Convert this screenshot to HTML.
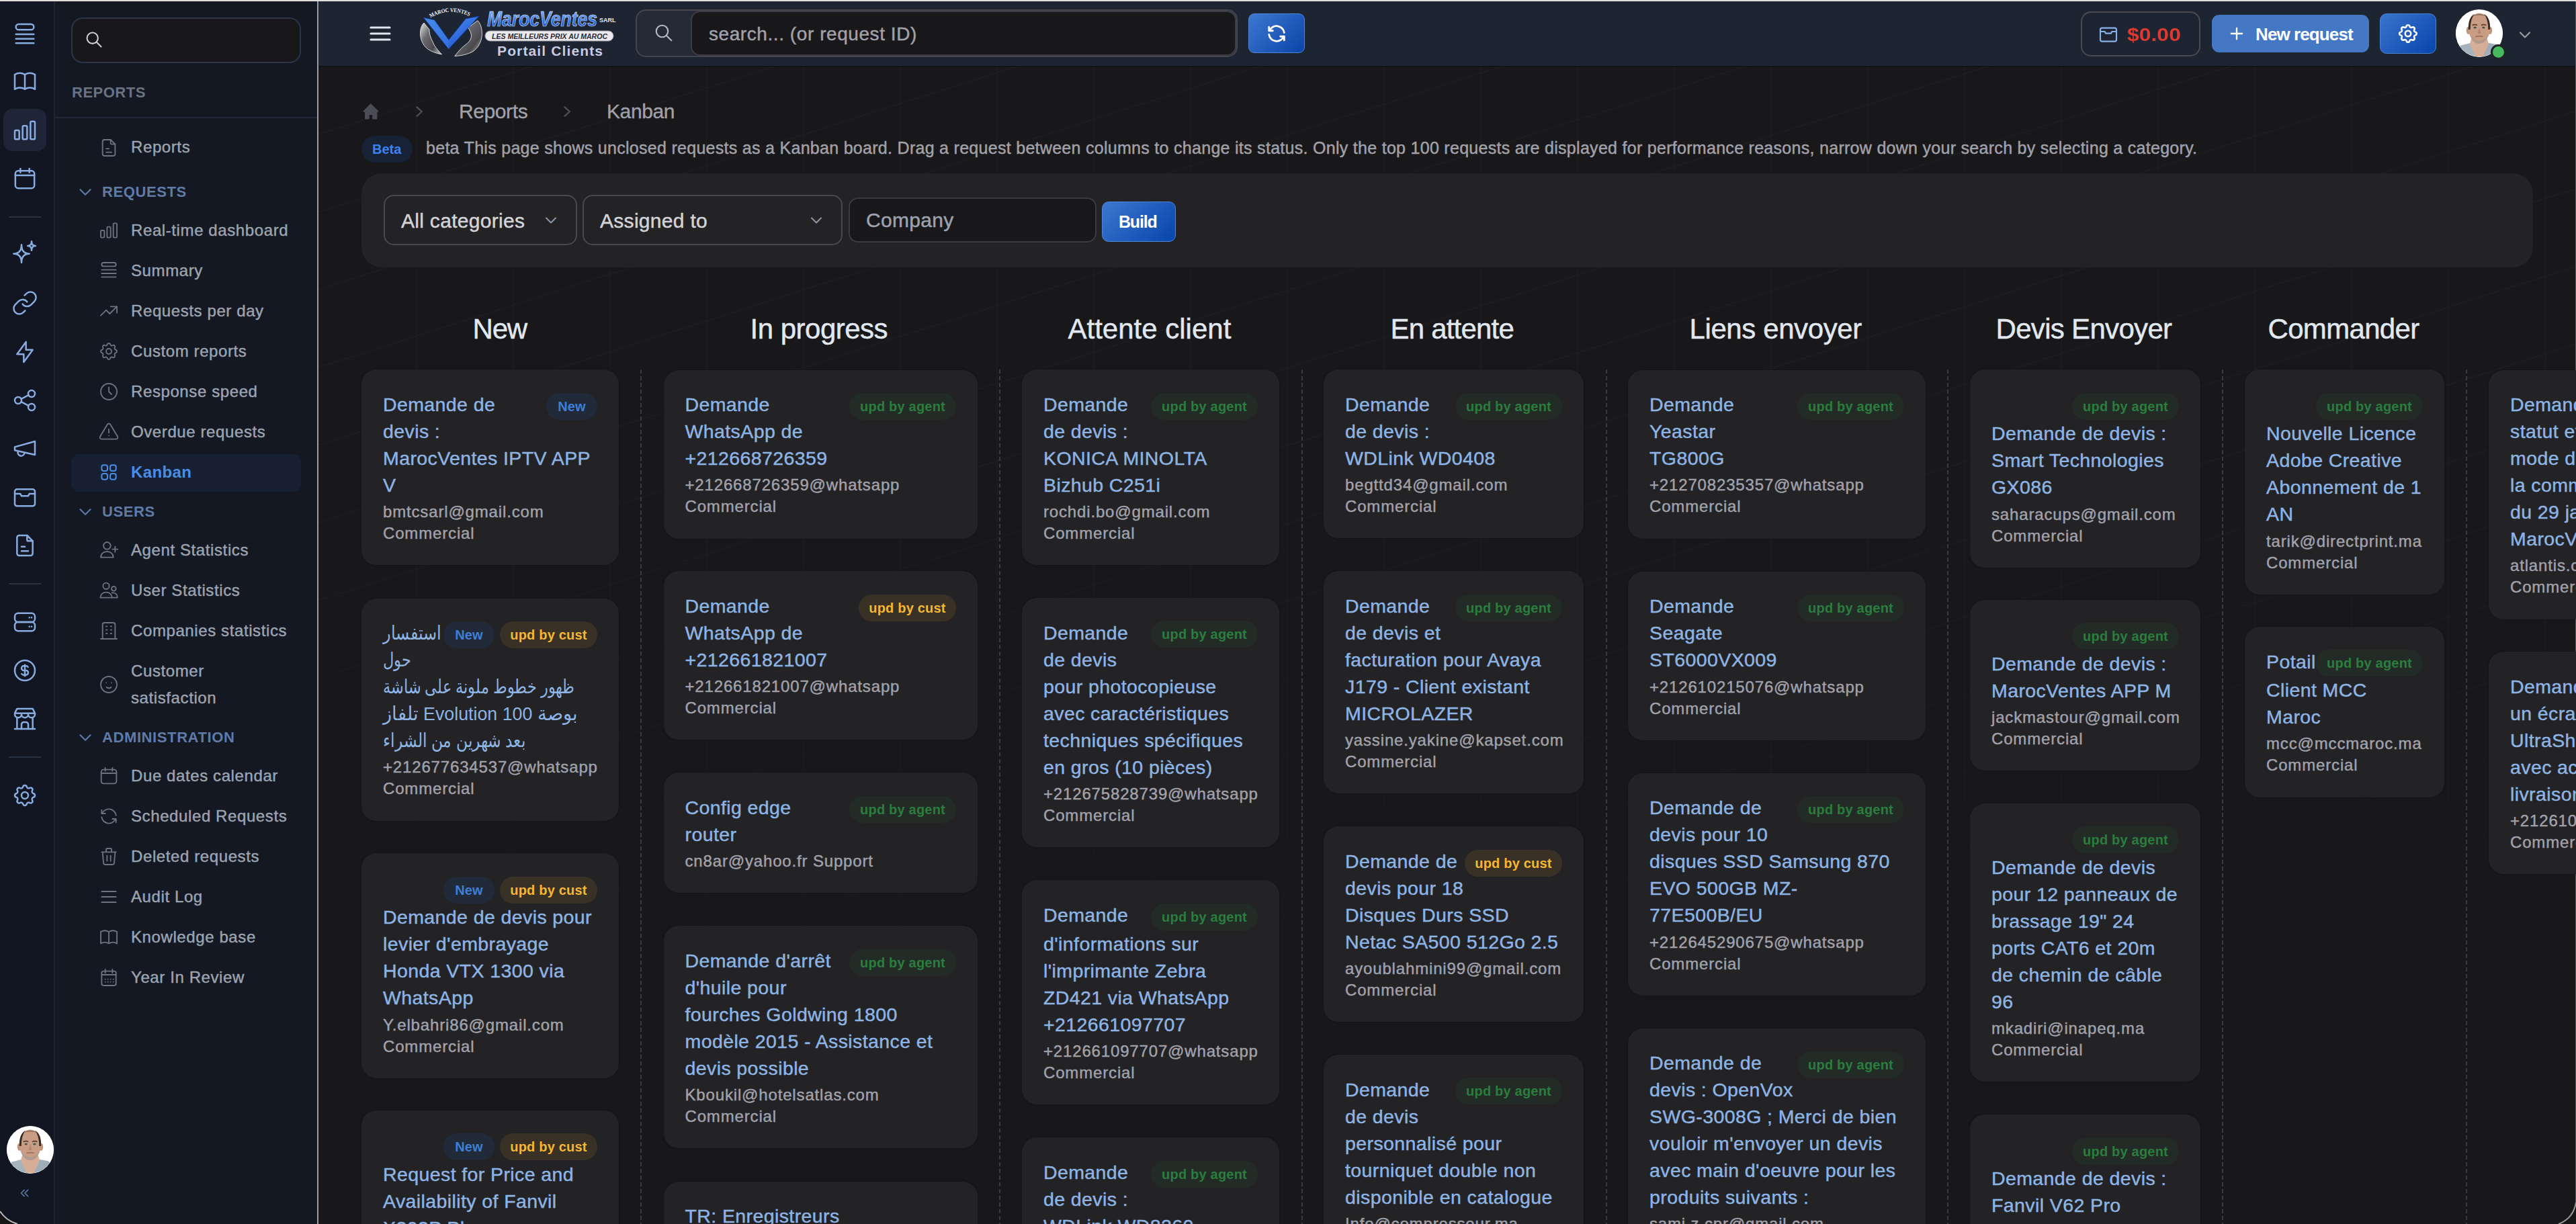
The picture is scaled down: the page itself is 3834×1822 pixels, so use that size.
<!DOCTYPE html><html><head><meta charset="utf-8"><style>
html,body{margin:0;padding:0;}
body{width:3834px;height:1822px;overflow:hidden;position:relative;background:#18181b;font-family:"Liberation Sans", sans-serif;}
.t{position:absolute;white-space:nowrap;}
.w4{-webkit-text-stroke:0.45px currentColor;}
.r{position:absolute;}
.ic{position:absolute;overflow:visible;}
.av{position:absolute;border-radius:50%;overflow:hidden;background:#fff;}
</style></head><body>
<div class="r" style="left:0px;top:0px;width:3834px;height:2px;background:#dedfdb;"></div>
<div class="r" style="left:0px;top:2px;width:81px;height:1820px;background:#111622;"></div>
<div class="r" style="left:80px;top:2px;width:2px;height:1820px;background:#1d2432;"></div>
<div class="r" style="left:82px;top:2px;width:390px;height:1820px;background:#131823;"></div>
<div class="r" style="left:472px;top:2px;width:2px;height:1820px;background:#9aa0a9;"></div>
<div class="r" style="left:474px;top:2px;width:3360px;height:96px;background:#1d2432;box-shadow:0 1px 1px rgba(0,0,0,.35);"></div>
<svg class="ic" style="left:474px;top:97px;width:3360px;height:1725px;overflow:hidden;-webkit-mask-image:linear-gradient(to bottom,#000 0px,#000 500px,rgba(0,0,0,.65) 1000px,transparent 1420px);mask-image:linear-gradient(to bottom,#000 0px,#000 500px,rgba(0,0,0,.65) 1000px,transparent 1420px)" viewBox="0 0 3360 1725"><g stroke="rgba(255,255,255,0.028)" stroke-width="1.6"><line x1="145.5" y1="0" x2="145.5" y2="1725"/><line x1="289.5" y1="0" x2="289.5" y2="1725"/><line x1="433.6" y1="0" x2="433.6" y2="1725"/><line x1="577.6" y1="0" x2="577.6" y2="1725"/><line x1="721.7" y1="0" x2="721.7" y2="1725"/><line x1="865.7" y1="0" x2="865.7" y2="1725"/><line x1="1009.8" y1="0" x2="1009.8" y2="1725"/><line x1="1153.8" y1="0" x2="1153.8" y2="1725"/><line x1="1297.9" y1="0" x2="1297.9" y2="1725"/><line x1="1441.9" y1="0" x2="1441.9" y2="1725"/><line x1="1586.0" y1="0" x2="1586.0" y2="1725"/><line x1="1730.0" y1="0" x2="1730.0" y2="1725"/><line x1="1874.1" y1="0" x2="1874.1" y2="1725"/><line x1="2018.2" y1="0" x2="2018.2" y2="1725"/><line x1="2162.2" y1="0" x2="2162.2" y2="1725"/><line x1="2306.3" y1="0" x2="2306.3" y2="1725"/><line x1="2450.3" y1="0" x2="2450.3" y2="1725"/><line x1="2594.4" y1="0" x2="2594.4" y2="1725"/><line x1="2738.4" y1="0" x2="2738.4" y2="1725"/><line x1="2882.5" y1="0" x2="2882.5" y2="1725"/><line x1="3026.5" y1="0" x2="3026.5" y2="1725"/><line x1="3170.6" y1="0" x2="3170.6" y2="1725"/><line x1="3314.6" y1="0" x2="3314.6" y2="1725"/><line x1="0" y1="103.1" x2="3360" y2="-972.1"/><line x1="0" y1="218.7" x2="3360" y2="-856.5"/><line x1="0" y1="334.3" x2="3360" y2="-740.9"/><line x1="0" y1="449.9" x2="3360" y2="-625.3"/><line x1="0" y1="565.5" x2="3360" y2="-509.7"/><line x1="0" y1="681.1" x2="3360" y2="-394.1"/><line x1="0" y1="796.7" x2="3360" y2="-278.5"/><line x1="0" y1="912.3" x2="3360" y2="-162.9"/><line x1="0" y1="1027.9" x2="3360" y2="-47.3"/><line x1="0" y1="1143.5" x2="3360" y2="68.3"/><line x1="0" y1="1259.1" x2="3360" y2="183.9"/><line x1="0" y1="1374.7" x2="3360" y2="299.5"/><line x1="0" y1="1490.3" x2="3360" y2="415.1"/><line x1="0" y1="1605.9" x2="3360" y2="530.7"/><line x1="0" y1="1721.5" x2="3360" y2="646.3"/><line x1="0" y1="1837.1" x2="3360" y2="761.9"/><line x1="0" y1="1952.7" x2="3360" y2="877.5"/><line x1="0" y1="2068.3" x2="3360" y2="993.1"/><line x1="0" y1="2183.9" x2="3360" y2="1108.7"/><line x1="0" y1="2299.5" x2="3360" y2="1224.3"/><line x1="0" y1="2415.1" x2="3360" y2="1339.9"/><line x1="0" y1="2530.7" x2="3360" y2="1455.5"/><line x1="0" y1="2646.3" x2="3360" y2="1571.1"/><line x1="0" y1="2761.9" x2="3360" y2="1686.7"/></g></svg>
<div class="r" style="left:3833px;top:2px;width:1px;height:1820px;background:#5a5d63;"></div>
<div class="r" style="left:5px;top:162px;width:64px;height:63px;background:#1d2536;border-radius:14px;"></div>
<svg class="ic" style="left:17px;top:31px;width:40px;height:40px" viewBox="0 0 24 24" fill="none" stroke="#88acdf" stroke-width="1.5" stroke-linecap="round" stroke-linejoin="round"><rect x="4" y="3" width="16" height="5" rx="2.5"/><path d="M4 12h16M4 16h16M4 20h16"/></svg>
<svg class="ic" style="left:17px;top:101px;width:40px;height:40px" viewBox="0 0 24 24" fill="none" stroke="#88acdf" stroke-width="1.5" stroke-linecap="round" stroke-linejoin="round"><path d="M3 19a9 9 0 0 1 9 0a9 9 0 0 1 9 0"/><path d="M3 6a9 9 0 0 1 9 0a9 9 0 0 1 9 0"/><path d="M3 6v13M12 6v13M21 6v13"/></svg>
<svg class="ic" style="left:17px;top:174px;width:40px;height:40px" viewBox="0 0 24 24" fill="none" stroke="#88acdf" stroke-width="1.5" stroke-linecap="round" stroke-linejoin="round"><rect x="3" y="12" width="4" height="8" rx="1"/><rect x="10" y="8" width="4" height="12" rx="1"/><rect x="17" y="4" width="4" height="16" rx="1"/></svg>
<svg class="ic" style="left:17px;top:246px;width:40px;height:40px" viewBox="0 0 24 24" fill="none" stroke="#88acdf" stroke-width="1.5" stroke-linecap="round" stroke-linejoin="round"><rect x="3.5" y="5" width="17" height="15.5" rx="2.5"/><path d="M16 3v3.5M8 3v3.5M3.5 9h17"/></svg>
<svg class="ic" style="left:17px;top:356px;width:40px;height:40px" viewBox="0 0 24 24" fill="none" stroke="#88acdf" stroke-width="1.5" stroke-linecap="round" stroke-linejoin="round"><path d="M9 21c0-5-2-8-7-8c5 0 7-3 7-8c0 5 2 8 7 8c-5 0-7 3-7 8z"/><path d="M18 10c0-2.5-1-4-3.5-4c2.5 0 3.5-1.5 3.5-4c0 2.5 1 4 3.5 4c-2.5 0-3.5 1.5-3.5 4z"/></svg>
<svg class="ic" style="left:17px;top:431px;width:40px;height:40px" viewBox="0 0 24 24" fill="none" stroke="#88acdf" stroke-width="1.5" stroke-linecap="round" stroke-linejoin="round"><path d="M10 13a5 5 0 0 0 7.54.54l3-3a5 5 0 0 0-7.07-7.07l-1.72 1.71"/><path d="M14 11a5 5 0 0 0-7.54-.54l-3 3a5 5 0 0 0 7.07 7.07l1.71-1.71"/></svg>
<svg class="ic" style="left:17px;top:504px;width:40px;height:40px" viewBox="0 0 24 24" fill="none" stroke="#88acdf" stroke-width="1.5" stroke-linecap="round" stroke-linejoin="round"><path d="M13 3l0 7l6 0l-8 11l0 -7l-6 0l8 -11"/></svg>
<svg class="ic" style="left:17px;top:576px;width:40px;height:40px" viewBox="0 0 24 24" fill="none" stroke="#88acdf" stroke-width="1.5" stroke-linecap="round" stroke-linejoin="round"><circle cx="6" cy="12" r="3"/><circle cx="18" cy="6" r="3"/><circle cx="18" cy="18" r="3"/><path d="M8.7 10.7l6.6 -3.4M8.7 13.3l6.6 3.4"/></svg>
<svg class="ic" style="left:17px;top:647px;width:40px;height:40px" viewBox="0 0 24 24" fill="none" stroke="#88acdf" stroke-width="1.5" stroke-linecap="round" stroke-linejoin="round"><path d="m3 11 18-5v12L3 14v-3z"/><path d="M11.6 16.8a3 3 0 1 1-5.8-1.6"/></svg>
<svg class="ic" style="left:17px;top:720px;width:40px;height:40px" viewBox="0 0 24 24" fill="none" stroke="#88acdf" stroke-width="1.5" stroke-linecap="round" stroke-linejoin="round"><rect x="3" y="5" width="18" height="15" rx="2"/><path d="M3 9h5l1 2h6l1-2h5"/></svg>
<svg class="ic" style="left:17px;top:792px;width:40px;height:40px" viewBox="0 0 24 24" fill="none" stroke="#88acdf" stroke-width="1.5" stroke-linecap="round" stroke-linejoin="round"><path d="M14 3v4a1 1 0 0 0 1 1h4"/><path d="M17 21h-10a2 2 0 0 1 -2 -2v-14a2 2 0 0 1 2 -2h7l5 5v11a2 2 0 0 1 -2 2z"/><path d="M9 17h6M9 13h3"/></svg>
<svg class="ic" style="left:17px;top:906px;width:40px;height:40px" viewBox="0 0 24 24" fill="none" stroke="#88acdf" stroke-width="1.5" stroke-linecap="round" stroke-linejoin="round"><path d="M3 4m0 3a3 3 0 0 1 3 -3h12a3 3 0 0 1 3 3v2a3 3 0 0 1 -3 3h-12a3 3 0 0 1 -3 -3z"/><path d="M3 12m0 3a3 3 0 0 1 3 -3h12a3 3 0 0 1 3 3v2a3 3 0 0 1 -3 3h-12a3 3 0 0 1 -3 -3z"/><path d="M7 8h.01M7 16h.01" transform="translate(9,0)"/><path d="M7 8h.01M7 16h.01" transform="translate(11,0)"/></svg>
<svg class="ic" style="left:17px;top:978px;width:40px;height:40px" viewBox="0 0 24 24" fill="none" stroke="#88acdf" stroke-width="1.5" stroke-linecap="round" stroke-linejoin="round"><circle cx="12" cy="12" r="9"/><path d="M14.8 9a2 2 0 0 0 -1.8 -1h-2a2 2 0 1 0 0 4h2a2 2 0 1 1 0 4h-2a2 2 0 0 1 -1.8 -1"/><path d="M12 7v10"/></svg>
<svg class="ic" style="left:17px;top:1050px;width:40px;height:40px" viewBox="0 0 24 24" fill="none" stroke="#88acdf" stroke-width="1.5" stroke-linecap="round" stroke-linejoin="round"><path d="M3 21l18 0"/><path d="M3 7v1a3 3 0 0 0 6 0v-1m0 1a3 3 0 0 0 6 0v-1m0 1a3 3 0 0 0 6 0v-1h-18l2 -4h14l2 4"/><path d="M5 21l0 -10.15"/><path d="M19 21l0 -10.15"/><path d="M9 21v-4a2 2 0 0 1 2 -2h2a2 2 0 0 1 2 2v4"/></svg>
<svg class="ic" style="left:17px;top:1164px;width:40px;height:40px" viewBox="0 0 24 24" fill="none" stroke="#88acdf" stroke-width="1.5" stroke-linecap="round" stroke-linejoin="round"><path d="M10.325 4.317c.426 -1.756 2.924 -1.756 3.35 0a1.724 1.724 0 0 0 2.573 1.066c1.543 -.94 3.31 .826 2.37 2.37a1.724 1.724 0 0 0 1.065 2.572c1.756 .426 1.756 2.924 0 3.35a1.724 1.724 0 0 0 -1.066 2.573c.94 1.543 -.826 3.31 -2.37 2.37a1.724 1.724 0 0 0 -2.572 1.065c-.426 1.756 -2.924 1.756 -3.35 0a1.724 1.724 0 0 0 -2.573 -1.066c-1.543 .94 -3.31 -.826 -2.37 -2.37a1.724 1.724 0 0 0 -1.065 -2.572c-1.756 -.426 -1.756 -2.924 0 -3.35a1.724 1.724 0 0 0 1.066 -2.573c-.94 -1.543 .826 -3.31 2.37 -2.37c1 .608 2.296 .07 2.572 -1.065z"/><circle cx="12" cy="12" r="3"/></svg>
<div class="r" style="left:13px;top:322px;width:48px;height:2px;background:#283142;"></div>
<div class="r" style="left:13px;top:868px;width:48px;height:2px;background:#283142;"></div>
<div class="r" style="left:13px;top:1126px;width:48px;height:2px;background:#283142;"></div>
<div class="av" style="left:10px;top:1676px;width:70px;height:71px;"><svg viewBox="0 0 100 100" width="100%" height="100%" style="display:block"><defs><clipPath id="avca"><circle cx="50" cy="50" r="50"/></clipPath></defs>
<g clip-path="url(#avca)"><rect width="100" height="100" fill="#ffffff"/>
<path d="M0 88 L10 76 L34 70 L46 100 L0 100Z" fill="#a5b3bd"/><path d="M100 84 L88 74 L66 70 L56 100 L100 100Z" fill="#9fadb8"/>
<path d="M33 62 L67 62 L70 72 L58 100 L42 100 L30 72Z" fill="#d6ae98"/>
<ellipse cx="27" cy="44" rx="4.5" ry="8" fill="#c2917a"/><ellipse cx="73" cy="44" rx="4.5" ry="8" fill="#c2917a"/>
<ellipse cx="50" cy="39" rx="23" ry="32" fill="#c99c84"/>
<path d="M27 42 Q26 16 40 9 Q31 20 31 42Z" fill="#3a2c24"/><path d="M73 42 Q74 16 60 9 Q69 20 69 42Z" fill="#3a2c24"/>
<path d="M34 14 Q50 4 66 14 Q50 9 34 14Z" fill="#8b6b5a"/>
<path d="M30 50 Q34 72 50 72 Q66 72 70 50 Q66 64 50 66 Q34 64 30 50Z" fill="#b09a8c"/>
<path d="M35 33 Q41 30 46 33" stroke="#5a3f33" stroke-width="2.4" fill="none"/><path d="M54 33 Q59 30 65 33" stroke="#5a3f33" stroke-width="2.4" fill="none"/>
<ellipse cx="41" cy="38" rx="3.2" ry="1.9" fill="#42524f"/><ellipse cx="59" cy="38" rx="3.2" ry="1.9" fill="#42524f"/>
<path d="M50 38 L46.5 50 Q50 52 53.5 50Z" fill="#b3876e"/>
<path d="M42 57 Q50 55 58 57" stroke="#96685a" stroke-width="2.2" fill="none"/>
</g></svg></div>
<svg class="ic" style="left:26px;top:1765px;width:22px;height:22px" viewBox="0 0 24 24" fill="none" stroke="#5677aa" stroke-width="1.8" stroke-linecap="round" stroke-linejoin="round"><path d="M11 7l-5 5l5 5"/><path d="M17 7l-5 5l5 5"/></svg>
<div class="r" style="left:106px;top:26px;width:342px;height:68px;background:#18181b;border:2px solid #2a3546;border-radius:17px;box-sizing:border-box;"></div>
<svg class="ic" style="left:126px;top:45px;width:28px;height:28px" viewBox="0 0 24 24" fill="none" stroke="#c9cdd4" stroke-width="1.8" stroke-linecap="round" stroke-linejoin="round"><circle cx="10" cy="10" r="7"/><path d="M21 21l-6 -6"/></svg>
<div class="t" style="left:107px;top:124.38px;font-size:22px;line-height:28px;color:#6b7280;font-weight:700;letter-spacing:0.5px;">REPORTS</div>
<div class="r" style="left:82px;top:174px;width:390px;height:2px;background:#202837;"></div>
<svg class="ic" style="left:146px;top:203.7px;width:32px;height:32px" viewBox="0 0 24 24" fill="none" stroke="#6b7280" stroke-width="1.4" stroke-linecap="round" stroke-linejoin="round"><path d="M14 3v4a1 1 0 0 0 1 1h4"/><path d="M17 21h-10a2 2 0 0 1 -2 -2v-14a2 2 0 0 1 2 -2h7l5 5v11a2 2 0 0 1 -2 2z"/><path d="M9 17h6M9 13h3"/></svg>
<div class="t w4" style="left:195px;top:204.38px;font-size:24px;line-height:30px;color:#9ca3af;font-weight:400;letter-spacing:0.6px;">Reports</div>
<svg class="ic" style="left:112px;top:271px;width:30px;height:30px" viewBox="0 0 24 24" fill="none" stroke="#5c7aa6" stroke-width="1.7" stroke-linecap="round" stroke-linejoin="round"><path d="M6 9l6 6l6 -6"/></svg>
<div class="t" style="left:152px;top:272.38px;font-size:22px;line-height:28px;color:#5f7ba6;font-weight:700;letter-spacing:0.6px;">REQUESTS</div>
<svg class="ic" style="left:146px;top:327px;width:32px;height:32px" viewBox="0 0 24 24" fill="none" stroke="#6b7280" stroke-width="1.4" stroke-linecap="round" stroke-linejoin="round"><rect x="3" y="12" width="4" height="8" rx="1"/><rect x="10" y="8" width="4" height="12" rx="1"/><rect x="17" y="4" width="4" height="16" rx="1"/></svg>
<div class="t w4" style="left:195px;top:327.68px;font-size:24px;line-height:30px;color:#9ca3af;font-weight:400;letter-spacing:0.6px;">Real-time dashboard</div>
<svg class="ic" style="left:146px;top:387px;width:32px;height:32px" viewBox="0 0 24 24" fill="none" stroke="#6b7280" stroke-width="1.4" stroke-linecap="round" stroke-linejoin="round"><rect x="4" y="3" width="16" height="4" rx="2"/><path d="M4 11h16M4 15h16M4 19h16"/></svg>
<div class="t w4" style="left:195px;top:387.68px;font-size:24px;line-height:30px;color:#9ca3af;font-weight:400;letter-spacing:0.6px;">Summary</div>
<svg class="ic" style="left:146px;top:447px;width:32px;height:32px" viewBox="0 0 24 24" fill="none" stroke="#6b7280" stroke-width="1.4" stroke-linecap="round" stroke-linejoin="round"><path d="M3 17l6 -6l4 4l8 -8"/><path d="M14 7l7 0l0 7"/></svg>
<div class="t w4" style="left:195px;top:447.68px;font-size:24px;line-height:30px;color:#9ca3af;font-weight:400;letter-spacing:0.6px;">Requests per day</div>
<svg class="ic" style="left:146px;top:507px;width:32px;height:32px" viewBox="0 0 24 24" fill="none" stroke="#6b7280" stroke-width="1.4" stroke-linecap="round" stroke-linejoin="round"><path d="M10.325 4.317c.426 -1.756 2.924 -1.756 3.35 0a1.724 1.724 0 0 0 2.573 1.066c1.543 -.94 3.31 .826 2.37 2.37a1.724 1.724 0 0 0 1.065 2.572c1.756 .426 1.756 2.924 0 3.35a1.724 1.724 0 0 0 -1.066 2.573c.94 1.543 -.826 3.31 -2.37 2.37a1.724 1.724 0 0 0 -2.572 1.065c-.426 1.756 -2.924 1.756 -3.35 0a1.724 1.724 0 0 0 -2.573 -1.066c-1.543 .94 -3.31 -.826 -2.37 -2.37a1.724 1.724 0 0 0 -1.065 -2.572c-1.756 -.426 -1.756 -2.924 0 -3.35a1.724 1.724 0 0 0 1.066 -2.573c-.94 -1.543 .826 -3.31 2.37 -2.37c1 .608 2.296 .07 2.572 -1.065z"/><circle cx="12" cy="12" r="3"/></svg>
<div class="t w4" style="left:195px;top:507.68px;font-size:24px;line-height:30px;color:#9ca3af;font-weight:400;letter-spacing:0.6px;">Custom reports</div>
<svg class="ic" style="left:146px;top:567px;width:32px;height:32px" viewBox="0 0 24 24" fill="none" stroke="#6b7280" stroke-width="1.4" stroke-linecap="round" stroke-linejoin="round"><circle cx="12" cy="12" r="9"/><path d="M12 7v5l3 3"/></svg>
<div class="t w4" style="left:195px;top:567.68px;font-size:24px;line-height:30px;color:#9ca3af;font-weight:400;letter-spacing:0.6px;">Response speed</div>
<svg class="ic" style="left:146px;top:627px;width:32px;height:32px" viewBox="0 0 24 24" fill="none" stroke="#6b7280" stroke-width="1.4" stroke-linecap="round" stroke-linejoin="round"><path d="M12 9v4"/><path d="M10.363 3.591l-8.106 13.534a1.914 1.914 0 0 0 1.636 2.871h16.214a1.914 1.914 0 0 0 1.636 -2.87l-8.106 -13.536a1.914 1.914 0 0 0 -3.274 0z"/><path d="M12 16h.01"/></svg>
<div class="t w4" style="left:195px;top:627.68px;font-size:24px;line-height:30px;color:#9ca3af;font-weight:400;letter-spacing:0.6px;">Overdue requests</div>
<div class="r" style="left:106px;top:676px;width:342px;height:56px;background:#172033;border-radius:12px;"></div>
<svg class="ic" style="left:146px;top:687px;width:32px;height:32px" viewBox="0 0 24 24" fill="none" stroke="#4a8de6" stroke-width="1.5" stroke-linecap="round" stroke-linejoin="round"><rect x="4" y="4" width="6.5" height="6.5" rx="2.2"/><rect x="13.5" y="4" width="6.5" height="6.5" rx="2.2"/><rect x="4" y="13.5" width="6.5" height="6.5" rx="2.2"/><rect x="13.5" y="13.5" width="6.5" height="6.5" rx="2.2"/></svg>
<div class="t" style="left:195px;top:687.68px;font-size:24px;line-height:30px;color:#4a8de6;font-weight:700;letter-spacing:0.4px;">Kanban</div>
<svg class="ic" style="left:112px;top:746.5px;width:30px;height:30px" viewBox="0 0 24 24" fill="none" stroke="#5c7aa6" stroke-width="1.7" stroke-linecap="round" stroke-linejoin="round"><path d="M6 9l6 6l6 -6"/></svg>
<div class="t" style="left:152px;top:747.88px;font-size:22px;line-height:28px;color:#5f7ba6;font-weight:700;letter-spacing:0.6px;">USERS</div>
<svg class="ic" style="left:146px;top:803px;width:32px;height:32px" viewBox="0 0 24 24" fill="none" stroke="#6b7280" stroke-width="1.4" stroke-linecap="round" stroke-linejoin="round"><circle cx="10" cy="7" r="4"/><path d="M3 20c0-3.9 3.1-6.5 7-6.5s7 2.6 7 6.5z"/><path d="M16 11h6m-3 -3v6"/></svg>
<div class="t w4" style="left:195px;top:803.68px;font-size:24px;line-height:30px;color:#9ca3af;font-weight:400;letter-spacing:0.6px;">Agent Statistics</div>
<svg class="ic" style="left:146px;top:863px;width:32px;height:32px" viewBox="0 0 24 24" fill="none" stroke="#6b7280" stroke-width="1.4" stroke-linecap="round" stroke-linejoin="round"><circle cx="9" cy="7" r="3.5"/><path d="M2.5 20c0-3.5 2.9-6 6.5-6s6.5 2.5 6.5 6z"/><circle cx="17.5" cy="10" r="2.5"/><path d="M15.5 14.6c3.5-0.6 6 1.5 6 4.4v1h-6"/></svg>
<div class="t w4" style="left:195px;top:863.68px;font-size:24px;line-height:30px;color:#9ca3af;font-weight:400;letter-spacing:0.6px;">User Statistics</div>
<svg class="ic" style="left:146px;top:923px;width:32px;height:32px" viewBox="0 0 24 24" fill="none" stroke="#6b7280" stroke-width="1.4" stroke-linecap="round" stroke-linejoin="round"><path d="M3 21l18 0"/><path d="M5 21v-16a2 2 0 0 1 2 -2h10a2 2 0 0 1 2 2v16"/><path d="M9 7h1M9 11h1M9 15h1M14 7h1M14 11h1M14 15h1"/></svg>
<div class="t w4" style="left:195px;top:923.68px;font-size:24px;line-height:30px;color:#9ca3af;font-weight:400;letter-spacing:0.6px;">Companies statistics</div>
<svg class="ic" style="left:146px;top:1003px;width:32px;height:32px" viewBox="0 0 24 24" fill="none" stroke="#6b7280" stroke-width="1.4" stroke-linecap="round" stroke-linejoin="round"><circle cx="12" cy="12" r="9"/><path d="M9 10l.01 0M15 10l.01 0"/><path d="M9.5 15a3.5 3.5 0 0 0 5 0"/></svg>
<div class="t w4" style="left:195px;top:983.68px;font-size:24px;line-height:30px;color:#9ca3af;font-weight:400;letter-spacing:0.6px;">Customer</div>
<div class="t w4" style="left:195px;top:1023.68px;font-size:24px;line-height:30px;color:#9ca3af;font-weight:400;letter-spacing:0.6px;">satisfaction</div>
<svg class="ic" style="left:112px;top:1083px;width:30px;height:30px" viewBox="0 0 24 24" fill="none" stroke="#5c7aa6" stroke-width="1.7" stroke-linecap="round" stroke-linejoin="round"><path d="M6 9l6 6l6 -6"/></svg>
<div class="t" style="left:152px;top:1084.38px;font-size:22px;line-height:28px;color:#5f7ba6;font-weight:700;letter-spacing:0.6px;">ADMINISTRATION</div>
<svg class="ic" style="left:146px;top:1139px;width:32px;height:32px" viewBox="0 0 24 24" fill="none" stroke="#6b7280" stroke-width="1.4" stroke-linecap="round" stroke-linejoin="round"><rect x="3.5" y="5" width="17" height="15.5" rx="2.5"/><path d="M16 3v3.5M8 3v3.5M3.5 9h17"/></svg>
<div class="t w4" style="left:195px;top:1139.68px;font-size:24px;line-height:30px;color:#9ca3af;font-weight:400;letter-spacing:0.6px;">Due dates calendar</div>
<svg class="ic" style="left:146px;top:1199px;width:32px;height:32px" viewBox="0 0 24 24" fill="none" stroke="#6b7280" stroke-width="1.4" stroke-linecap="round" stroke-linejoin="round"><path d="M20 11a8.1 8.1 0 0 0 -15.5 -2m-.5 -4v4h4"/><path d="M4 13a8.1 8.1 0 0 0 15.5 2m.5 4v-4h-4"/></svg>
<div class="t w4" style="left:195px;top:1199.68px;font-size:24px;line-height:30px;color:#9ca3af;font-weight:400;letter-spacing:0.6px;">Scheduled Requests</div>
<svg class="ic" style="left:146px;top:1259px;width:32px;height:32px" viewBox="0 0 24 24" fill="none" stroke="#6b7280" stroke-width="1.4" stroke-linecap="round" stroke-linejoin="round"><path d="M4 7l16 0"/><path d="M10 11l0 6M14 11l0 6"/><path d="M5 7l1 12a2 2 0 0 0 2 2h8a2 2 0 0 0 2 -2l1 -12"/><path d="M9 7v-3a1 1 0 0 1 1 -1h4a1 1 0 0 1 1 1v3"/></svg>
<div class="t w4" style="left:195px;top:1259.68px;font-size:24px;line-height:30px;color:#9ca3af;font-weight:400;letter-spacing:0.6px;">Deleted requests</div>
<svg class="ic" style="left:146px;top:1319px;width:32px;height:32px" viewBox="0 0 24 24" fill="none" stroke="#6b7280" stroke-width="1.4" stroke-linecap="round" stroke-linejoin="round"><path d="M4 6h16M4 12h16M4 18h16"/></svg>
<div class="t w4" style="left:195px;top:1319.68px;font-size:24px;line-height:30px;color:#9ca3af;font-weight:400;letter-spacing:0.6px;">Audit Log</div>
<svg class="ic" style="left:146px;top:1379px;width:32px;height:32px" viewBox="0 0 24 24" fill="none" stroke="#6b7280" stroke-width="1.4" stroke-linecap="round" stroke-linejoin="round"><path d="M3 19a9 9 0 0 1 9 0a9 9 0 0 1 9 0"/><path d="M3 6a9 9 0 0 1 9 0a9 9 0 0 1 9 0"/><path d="M3 6v13M12 6v13M21 6v13"/></svg>
<div class="t w4" style="left:195px;top:1379.68px;font-size:24px;line-height:30px;color:#9ca3af;font-weight:400;letter-spacing:0.6px;">Knowledge base</div>
<svg class="ic" style="left:146px;top:1439px;width:32px;height:32px" viewBox="0 0 24 24" fill="none" stroke="#6b7280" stroke-width="1.4" stroke-linecap="round" stroke-linejoin="round"><rect x="4" y="5" width="16" height="16" rx="2"/><path d="M16 3v4M8 3v4M4 9h16"/><path d="M8 14h.01M11 14h.01M14 14h.01M17 14h.01M8 17h.01M11 17h.01M14 17h.01M17 17h.01"/></svg>
<div class="t w4" style="left:195px;top:1439.68px;font-size:24px;line-height:30px;color:#9ca3af;font-weight:400;letter-spacing:0.6px;">Year In Review</div>
<svg class="ic" style="left:549px;top:38px;width:34px;height:24px" viewBox="0 0 34 24"><path d="M3 3h28M3 12h28M3 21h28" stroke="#dfe6f1" stroke-width="3.2" stroke-linecap="round"/></svg>
<svg class="ic" style="left:620px;top:10px;width:300px;height:80px" viewBox="0 0 300 80">
<defs>
<linearGradient id="gring" x1="0" y1="0" x2="0" y2="1"><stop offset="0" stop-color="#d8d8d8"/><stop offset=".5" stop-color="#6d6d70"/><stop offset="1" stop-color="#cfcfcf"/></linearGradient>
<linearGradient id="gv" x1="0" y1="0" x2="1" y2="1"><stop offset="0" stop-color="#5aa0ff"/><stop offset="1" stop-color="#1747c8"/></linearGradient>
<linearGradient id="gt" x1="0" y1="0" x2="0" y2="1"><stop offset="0" stop-color="#9cc3ff"/><stop offset=".6" stop-color="#2f6ee0"/><stop offset="1" stop-color="#1b3f9e"/></linearGradient>
</defs>
<linearGradient id="gmet" x1="0" y1="0" x2="1" y2="1"><stop offset="0" stop-color="#e6e6e6"/><stop offset=".35" stop-color="#6a6a6e"/><stop offset=".7" stop-color="#4a4a4e"/><stop offset="1" stop-color="#d0d0d0"/></linearGradient>
<path d="M11 24 C2 32 3 58 22 66 C28 69 33 70 37.5 71 C31 64 26 58 24.5 53 C20 45 19 39 19 34 Z" fill="url(#gmet)" stroke="#d8d8d8" stroke-width="1"/>
<path d="M91 20.6 C100 30 101 55 84 66.6 C76 71 66 73 56.8 73.5 C62 67 66 62 70.5 58.4 C78 53 83 48 81 40 C80 36 78 34 77 31 Z" fill="url(#gmet)" stroke="#d8d8d8" stroke-width="1"/>
<path d="M10.8 16.5 L26.6 20 L47.8 49.5 L73.2 17.9 L93.1 14.1 L47.8 62.9 Z" fill="url(#gv)" stroke="#0a3aa8" stroke-width="0.8"/>
<path d="M10.8 16.5 L26.6 20 L47.8 49.5 L47.8 62.9 Z" fill="#3d7be0" opacity=".55"/>
<path id="arcp" d="M20 17 Q50 -1 82 16" fill="none"/>
<text font-family="Liberation Serif" font-weight="700" font-size="8.5" fill="#f0f0f0" letter-spacing="-0.2"><textPath href="#arcp" startOffset="1" textLength="60" lengthAdjust="spacingAndGlyphs">MAROC VENTES</textPath></text>
<text x="105" y="29" font-family="Liberation Sans" font-weight="700" font-style="italic" font-size="31" fill="url(#gt)" stroke="#dfe9ff" stroke-width="0.6" textLength="164" lengthAdjust="spacingAndGlyphs">MarocVentes</text>
<text x="272" y="23" font-family="Liberation Sans" font-weight="700" font-size="9" fill="#e8e8f0">SARL</text>
<rect x="102" y="36" width="191" height="15" rx="7.5" fill="#e9e9ee" stroke="#9a9aa2" stroke-width="1"/>
<text x="112" y="48" font-family="Liberation Sans" font-weight="700" font-style="italic" font-size="11.5" fill="#2a2a35" textLength="172" lengthAdjust="spacingAndGlyphs">LES MEILLEURS PRIX AU MAROC</text>
<text x="120" y="73" font-family="Liberation Sans" font-weight="700" font-size="21" fill="#c9cbe2" textLength="157" lengthAdjust="spacing">Portail Clients</text>
</svg>
<div class="r" style="left:946px;top:14px;width:896px;height:71px;background:#252a36;border:2px solid #44454d;border-radius:15px;box-sizing:border-box;"></div>
<div class="r" style="left:1028px;top:16px;width:812px;height:67px;background:#18181b;border:2px solid #3b3b43;border-radius:14px;box-sizing:border-box;"></div>
<svg class="ic" style="left:973px;top:34px;width:30px;height:30px" viewBox="0 0 24 24" fill="none" stroke="#b4b8c0" stroke-width="1.7" stroke-linecap="round" stroke-linejoin="round"><circle cx="10" cy="10" r="7"/><path d="M21 21l-6 -6"/></svg>
<div class="t w4" style="left:1055px;top:32.80px;font-size:28px;line-height:35px;color:#a1a1aa;font-weight:400;letter-spacing:0.57px;">search... (or request ID)</div>
<div class="r" style="left:1858px;top:20px;width:84px;height:59px;background:linear-gradient(135deg,#3f78d0,#0a44a8);border:1.5px solid #4f86d8;border-radius:9px;box-sizing:border-box;"></div>
<svg class="ic" style="left:1883px;top:33px;width:34px;height:34px" viewBox="0 0 24 24" fill="none" stroke="#ffffff" stroke-width="2" stroke-linecap="round" stroke-linejoin="round"><path d="M20 11a8.1 8.1 0 0 0 -15.5 -2m-.5 -4v4h4"/><path d="M4 13a8.1 8.1 0 0 0 15.5 2m.5 4v-4h-4"/></svg>
<div class="r" style="left:3097px;top:17px;width:178px;height:67px;background:transparent;border:2px solid #4a4a52;border-radius:15px;box-sizing:border-box;"></div>
<svg class="ic" style="left:3122px;top:35px;width:32px;height:32px" viewBox="0 0 24 24" fill="none" stroke="#8ab0e8" stroke-width="1.6" stroke-linecap="round" stroke-linejoin="round"><rect x="3" y="5" width="18" height="15" rx="2"/><path d="M3 9h5l1 2h6l1-2h5"/></svg>
<div class="t" style="left:3166px;top:33.80px;font-size:28px;line-height:35px;color:#dc3a2e;font-weight:700;letter-spacing:0px;transform:scaleX(1.14);transform-origin:0 0;">$0.00</div>
<div class="r" style="left:3292px;top:22px;width:234px;height:56px;background:#4578c4;border-radius:11px;"></div>
<svg class="ic" style="left:3315px;top:36px;width:28px;height:28px" viewBox="0 0 24 24" fill="none" stroke="#ffffff" stroke-width="2" stroke-linecap="round" stroke-linejoin="round"><path d="M12 5l0 14M5 12l14 0"/></svg>
<div class="t" style="left:3357px;top:34.99px;font-size:26px;line-height:32px;color:#ffffff;font-weight:700;letter-spacing:-0.9px;">New request</div>
<div class="r" style="left:3542px;top:20px;width:84px;height:60px;background:linear-gradient(135deg,#3a74cc,#0845aa);border:1.5px solid #4a82d6;border-radius:10px;box-sizing:border-box;"></div>
<svg class="ic" style="left:3567px;top:33px;width:34px;height:34px" viewBox="0 0 24 24" fill="none" stroke="#ffffff" stroke-width="1.8" stroke-linecap="round" stroke-linejoin="round"><path d="M10.325 4.317c.426 -1.756 2.924 -1.756 3.35 0a1.724 1.724 0 0 0 2.573 1.066c1.543 -.94 3.31 .826 2.37 2.37a1.724 1.724 0 0 0 1.065 2.572c1.756 .426 1.756 2.924 0 3.35a1.724 1.724 0 0 0 -1.066 2.573c.94 1.543 -.826 3.31 -2.37 2.37a1.724 1.724 0 0 0 -2.572 1.065c-.426 1.756 -2.924 1.756 -3.35 0a1.724 1.724 0 0 0 -2.573 -1.066c-1.543 .94 -3.31 -.826 -2.37 -2.37a1.724 1.724 0 0 0 -1.065 -2.572c-1.756 -.426 -1.756 -2.924 0 -3.35a1.724 1.724 0 0 0 1.066 -2.573c-.94 -1.543 .826 -3.31 2.37 -2.37c1 .608 2.296 .07 2.572 -1.065z"/><circle cx="12" cy="12" r="3"/></svg>
<div class="av" style="left:3655px;top:14px;width:70px;height:71px;"><svg viewBox="0 0 100 100" width="100%" height="100%" style="display:block"><defs><clipPath id="avcb"><circle cx="50" cy="50" r="50"/></clipPath></defs>
<g clip-path="url(#avcb)"><rect width="100" height="100" fill="#ffffff"/>
<path d="M0 88 L10 76 L34 70 L46 100 L0 100Z" fill="#a5b3bd"/><path d="M100 84 L88 74 L66 70 L56 100 L100 100Z" fill="#9fadb8"/>
<path d="M33 62 L67 62 L70 72 L58 100 L42 100 L30 72Z" fill="#d6ae98"/>
<ellipse cx="27" cy="44" rx="4.5" ry="8" fill="#c2917a"/><ellipse cx="73" cy="44" rx="4.5" ry="8" fill="#c2917a"/>
<ellipse cx="50" cy="39" rx="23" ry="32" fill="#c99c84"/>
<path d="M27 42 Q26 16 40 9 Q31 20 31 42Z" fill="#3a2c24"/><path d="M73 42 Q74 16 60 9 Q69 20 69 42Z" fill="#3a2c24"/>
<path d="M34 14 Q50 4 66 14 Q50 9 34 14Z" fill="#8b6b5a"/>
<path d="M30 50 Q34 72 50 72 Q66 72 70 50 Q66 64 50 66 Q34 64 30 50Z" fill="#b09a8c"/>
<path d="M35 33 Q41 30 46 33" stroke="#5a3f33" stroke-width="2.4" fill="none"/><path d="M54 33 Q59 30 65 33" stroke="#5a3f33" stroke-width="2.4" fill="none"/>
<ellipse cx="41" cy="38" rx="3.2" ry="1.9" fill="#42524f"/><ellipse cx="59" cy="38" rx="3.2" ry="1.9" fill="#42524f"/>
<path d="M50 38 L46.5 50 Q50 52 53.5 50Z" fill="#b3876e"/>
<path d="M42 57 Q50 55 58 57" stroke="#96685a" stroke-width="2.2" fill="none"/>
</g></svg></div>
<div class="r" style="left:3706.5px;top:66.3px;width:23px;height:23px;background:#45bb5d;border:3.5px solid #222327;border-radius:50%;box-sizing:border-box;"></div>
<svg class="ic" style="left:3744px;top:38px;width:28px;height:28px" viewBox="0 0 24 24" fill="none" stroke="#9aa0aa" stroke-width="1.8" stroke-linecap="round" stroke-linejoin="round"><path d="M6 9l6 6l6 -6"/></svg>
<svg class="ic" style="left:538px;top:150px;width:30px;height:30px" viewBox="0 0 30 30"><path d="M13.8 5 L2.9 15.9 L5.7 15.9 L5.7 26.8 L11 26.8 L11 20.2 L16.8 20.2 L16.8 26.8 L22.7 26.8 L22.7 15.9 L24.9 15.9 Z" fill="#4c4c53" stroke="#4c4c53" stroke-width="1.4" stroke-linejoin="round"/></svg>
<svg class="ic" style="left:610px;top:150px;width:30px;height:30px" viewBox="0 0 30 30"><path d="M10.5 9.5 L17.8 16.2 L10.5 22.8" fill="none" stroke="#4c4c53" stroke-width="2.4" stroke-linecap="round" stroke-linejoin="round"/></svg>
<div class="t w4" style="left:683px;top:146.60px;font-size:30px;line-height:38px;color:#a1a1aa;font-weight:400;letter-spacing:-0.4px;-webkit-text-stroke:0.35px #a1a1aa;">Reports</div>
<svg class="ic" style="left:830px;top:150px;width:30px;height:30px" viewBox="0 0 30 30"><path d="M10.5 9.5 L17.8 16.2 L10.5 22.8" fill="none" stroke="#4c4c53" stroke-width="2.4" stroke-linecap="round" stroke-linejoin="round"/></svg>
<div class="t w4" style="left:903px;top:146.60px;font-size:30px;line-height:38px;color:#a1a1aa;font-weight:400;letter-spacing:-0.4px;-webkit-text-stroke:0.35px #a1a1aa;">Kanban</div>
<div class="r" style="left:538px;top:202px;width:76px;height:40px;background:#172236;border-radius:20px;"></div>
<div class="t" style="left:554px;top:209.57px;font-size:20px;line-height:25px;color:#3b82f6;font-weight:700;letter-spacing:0px;">Beta</div>
<div class="t w4" style="left:634px;top:204.84px;font-size:25px;line-height:31px;color:#a1a1aa;font-weight:400;letter-spacing:0.29px;">beta This page shows unclosed requests as a Kanban board. Drag a request between columns to change its status. Only the top 100 requests are displayed for performance reasons, narrow down your search by selecting a category.</div>
<div class="r" style="left:538px;top:258px;width:3232px;height:140px;background:#232326;border-radius:30px;"></div>
<div class="r" style="left:571px;top:290px;width:288px;height:75px;background:transparent;border:2px solid #48484f;border-radius:15px;box-sizing:border-box;"></div>
<div class="t w4" style="left:597px;top:309.61px;font-size:30px;line-height:38px;color:#d4d4d8;font-weight:400;letter-spacing:0.3px;">All categories</div>
<svg class="ic" style="left:806px;top:314px;width:28px;height:28px" viewBox="0 0 24 24" fill="none" stroke="#8b95a5" stroke-width="1.8" stroke-linecap="round" stroke-linejoin="round"><path d="M6 9l6 6l6 -6"/></svg>
<div class="r" style="left:867px;top:290px;width:387px;height:75px;background:transparent;border:2px solid #48484f;border-radius:15px;box-sizing:border-box;"></div>
<div class="t w4" style="left:893px;top:309.61px;font-size:30px;line-height:38px;color:#d4d4d8;font-weight:400;letter-spacing:0.3px;">Assigned to</div>
<svg class="ic" style="left:1201px;top:314px;width:28px;height:28px" viewBox="0 0 24 24" fill="none" stroke="#8b95a5" stroke-width="1.8" stroke-linecap="round" stroke-linejoin="round"><path d="M6 9l6 6l6 -6"/></svg>
<div class="r" style="left:1263px;top:294px;width:369px;height:67px;background:#18181b;border:2px solid #3a3a41;border-radius:14px;box-sizing:border-box;"></div>
<div class="t w4" style="left:1289px;top:308.61px;font-size:30px;line-height:38px;color:#9ca3af;font-weight:400;letter-spacing:0.3px;">Company</div>
<div class="r" style="left:1640px;top:300px;width:110px;height:60px;background:linear-gradient(135deg,#3d77cf,#0645aa);border:1.5px solid #4f86d8;border-radius:10px;box-sizing:border-box;"></div>
<div class="t" style="left:1665px;top:314.84px;font-size:25px;line-height:31px;color:#ffffff;font-weight:700;letter-spacing:-1.2px;">Build</div>
<div class="t w4" style="left:703.5px;top:463.75px;font-size:42px;line-height:52px;color:#e2e8f0;font-weight:400;letter-spacing:-1.2px;">New</div>
<div class="t w4" style="left:1116.5px;top:463.75px;font-size:42px;line-height:52px;color:#e2e8f0;font-weight:400;letter-spacing:-0.5px;">In progress</div>
<div class="t w4" style="left:1589.5px;top:463.75px;font-size:42px;line-height:52px;color:#e2e8f0;font-weight:400;letter-spacing:0.0px;">Attente client</div>
<div class="t w4" style="left:2069.5px;top:463.75px;font-size:42px;line-height:52px;color:#e2e8f0;font-weight:400;letter-spacing:-0.8px;">En attente</div>
<div class="t w4" style="left:2514.5px;top:463.75px;font-size:42px;line-height:52px;color:#e2e8f0;font-weight:400;letter-spacing:-0.4px;">Liens envoyer</div>
<div class="t w4" style="left:2970.5px;top:463.75px;font-size:42px;line-height:52px;color:#e2e8f0;font-weight:400;letter-spacing:-0.68px;">Devis Envoyer</div>
<div class="t w4" style="left:3375.5px;top:463.75px;font-size:42px;line-height:52px;color:#e2e8f0;font-weight:400;letter-spacing:-0.67px;">Commander</div>
<div class="r" style="left:953px;top:550px;width:2px;height:1272px;background:repeating-linear-gradient(to bottom,#3a3a40 0 6px,transparent 6px 10px);"></div>
<div class="r" style="left:1487px;top:550px;width:2px;height:1272px;background:repeating-linear-gradient(to bottom,#3a3a40 0 6px,transparent 6px 10px);"></div>
<div class="r" style="left:1937px;top:550px;width:2px;height:1272px;background:repeating-linear-gradient(to bottom,#3a3a40 0 6px,transparent 6px 10px);"></div>
<div class="r" style="left:2390px;top:550px;width:2px;height:1272px;background:repeating-linear-gradient(to bottom,#3a3a40 0 6px,transparent 6px 10px);"></div>
<div class="r" style="left:2898px;top:550px;width:2px;height:1272px;background:repeating-linear-gradient(to bottom,#3a3a40 0 6px,transparent 6px 10px);"></div>
<div class="r" style="left:3307px;top:550px;width:2px;height:1272px;background:repeating-linear-gradient(to bottom,#3a3a40 0 6px,transparent 6px 10px);"></div>
<div class="r" style="left:3670px;top:550px;width:2px;height:1272px;background:repeating-linear-gradient(to bottom,#3a3a40 0 6px,transparent 6px 10px);"></div>
<div class="r" style="left:538px;top:550px;width:383px;height:291.2px;background:#232326;border-radius:22px;box-shadow:0 0 3px rgba(0,0,0,.3);"></div>
<div class="r" style="left:813px;top:584.7px;width:76px;height:40px;background:#212a39;border-radius:20px;"></div>
<div class="t" style="left:813.0px;top:584.7px;width:76px;height:40px;line-height:40px;text-align:center;font-size:20px;font-weight:700;color:#3d7fd6;letter-spacing:0.2px">New</div>
<div class="t w4" style="left:570px;top:583.82px;font-size:28.5px;line-height:36px;color:#8db4e3;font-weight:400;letter-spacing:0.4px;">Demande de</div>
<div class="t w4" style="left:570px;top:623.82px;font-size:28.5px;line-height:36px;color:#8db4e3;font-weight:400;letter-spacing:0.4px;">devis :</div>
<div class="t w4" style="left:570px;top:663.82px;font-size:28.5px;line-height:36px;color:#8db4e3;font-weight:400;letter-spacing:0.4px;">MarocVentes IPTV APP</div>
<div class="t w4" style="left:570px;top:703.82px;font-size:28.5px;line-height:36px;color:#8db4e3;font-weight:400;letter-spacing:0.4px;">V</div>
<div class="t w4" style="left:570px;top:745.98px;font-size:24px;line-height:32px;color:#a1a1aa;font-weight:400;letter-spacing:0.84px;">bmtcsarl@gmail.com</div>
<div class="t w4" style="left:570px;top:777.98px;font-size:24px;line-height:32px;color:#a1a1aa;font-weight:400;letter-spacing:0.84px;">Commercial</div>
<div class="r" style="left:538px;top:890.5px;width:383px;height:331.2px;background:#232326;border-radius:22px;box-shadow:0 0 3px rgba(0,0,0,.3);"></div>
<div class="r" style="left:744px;top:925.2px;width:145px;height:40px;background:#3a3126;border-radius:20px;"></div>
<div class="t" style="left:744.0px;top:925.2px;width:145px;height:40px;line-height:40px;text-align:center;font-size:20px;font-weight:700;color:#f5b731;letter-spacing:0.2px">upd by cust</div>
<div class="r" style="left:660px;top:925.2px;width:76px;height:40px;background:#212a39;border-radius:20px;"></div>
<div class="t" style="left:660.0px;top:925.2px;width:76px;height:40px;line-height:40px;text-align:center;font-size:20px;font-weight:700;color:#3d7fd6;letter-spacing:0.2px">New</div>
<svg class="ic" style="left:570px;top:922.2px;width:87px;height:40px" viewBox="0 0 87 40"><text x="0" y="30" font-size="28.5" fill="#8db4e3" textLength="87" lengthAdjust="spacingAndGlyphs" font-family="Liberation Sans, sans-serif">استفسار</text></svg>
<svg class="ic" style="left:570px;top:962.2px;width:42px;height:40px" viewBox="0 0 42 40"><text x="0" y="30" font-size="28.5" fill="#8db4e3" textLength="42" lengthAdjust="spacingAndGlyphs" font-family="Liberation Sans, sans-serif">حول</text></svg>
<svg class="ic" style="left:570px;top:1002.2px;width:285px;height:40px" viewBox="0 0 285 40"><text x="0" y="30" font-size="28.5" fill="#8db4e3" textLength="285" lengthAdjust="spacingAndGlyphs" font-family="Liberation Sans, sans-serif">ظهور خطوط ملونة على شاشة</text></svg>
<svg class="ic" style="left:570px;top:1042.2px;width:290px;height:40px" viewBox="0 0 290 40"><text x="0" y="30" font-size="28.5" fill="#8db4e3" textLength="290" lengthAdjust="spacingAndGlyphs" font-family="Liberation Sans, sans-serif">تلفاز Evolution 100 بوصة</text></svg>
<svg class="ic" style="left:570px;top:1082.2px;width:212px;height:40px" viewBox="0 0 212 40"><text x="0" y="30" font-size="28.5" fill="#8db4e3" textLength="212" lengthAdjust="spacingAndGlyphs" font-family="Liberation Sans, sans-serif">بعد شهرين من الشراء</text></svg>
<div class="t w4" style="left:570px;top:1126.48px;font-size:24px;line-height:32px;color:#a1a1aa;font-weight:400;letter-spacing:0.84px;">+212677634537@whatsapp</div>
<div class="t w4" style="left:570px;top:1158.48px;font-size:24px;line-height:32px;color:#a1a1aa;font-weight:400;letter-spacing:0.84px;">Commercial</div>
<div class="r" style="left:538px;top:1270px;width:383px;height:334.8px;background:#232326;border-radius:22px;box-shadow:0 0 3px rgba(0,0,0,.3);"></div>
<div class="r" style="left:744px;top:1304.7px;width:145px;height:40px;background:#3a3126;border-radius:20px;"></div>
<div class="t" style="left:744.0px;top:1304.7px;width:145px;height:40px;line-height:40px;text-align:center;font-size:20px;font-weight:700;color:#f5b731;letter-spacing:0.2px">upd by cust</div>
<div class="r" style="left:660px;top:1304.7px;width:76px;height:40px;background:#212a39;border-radius:20px;"></div>
<div class="t" style="left:660.0px;top:1304.7px;width:76px;height:40px;line-height:40px;text-align:center;font-size:20px;font-weight:700;color:#3d7fd6;letter-spacing:0.2px">New</div>
<div class="t w4" style="left:570px;top:1347.42px;font-size:28.5px;line-height:36px;color:#8db4e3;font-weight:400;letter-spacing:0.4px;">Demande de devis pour</div>
<div class="t w4" style="left:570px;top:1387.42px;font-size:28.5px;line-height:36px;color:#8db4e3;font-weight:400;letter-spacing:0.4px;">levier d&#x27;embrayage</div>
<div class="t w4" style="left:570px;top:1427.42px;font-size:28.5px;line-height:36px;color:#8db4e3;font-weight:400;letter-spacing:0.4px;">Honda VTX 1300 via</div>
<div class="t w4" style="left:570px;top:1467.42px;font-size:28.5px;line-height:36px;color:#8db4e3;font-weight:400;letter-spacing:0.4px;">WhatsApp</div>
<div class="t w4" style="left:570px;top:1509.58px;font-size:24px;line-height:32px;color:#a1a1aa;font-weight:400;letter-spacing:0.84px;">Y.elbahri86@gmail.com</div>
<div class="t w4" style="left:570px;top:1541.58px;font-size:24px;line-height:32px;color:#a1a1aa;font-weight:400;letter-spacing:0.84px;">Commercial</div>
<div class="r" style="left:538px;top:1652.5px;width:383px;height:262.8px;background:#232326;border-radius:22px;box-shadow:0 0 3px rgba(0,0,0,.3);"></div>
<div class="r" style="left:744px;top:1687.2px;width:145px;height:40px;background:#3a3126;border-radius:20px;"></div>
<div class="t" style="left:744.0px;top:1687.2px;width:145px;height:40px;line-height:40px;text-align:center;font-size:20px;font-weight:700;color:#f5b731;letter-spacing:0.2px">upd by cust</div>
<div class="r" style="left:660px;top:1687.2px;width:76px;height:40px;background:#212a39;border-radius:20px;"></div>
<div class="t" style="left:660.0px;top:1687.2px;width:76px;height:40px;line-height:40px;text-align:center;font-size:20px;font-weight:700;color:#3d7fd6;letter-spacing:0.2px">New</div>
<div class="t w4" style="left:570px;top:1729.92px;font-size:28.5px;line-height:36px;color:#8db4e3;font-weight:400;letter-spacing:0.4px;">Request for Price and</div>
<div class="t w4" style="left:570px;top:1769.92px;font-size:28.5px;line-height:36px;color:#8db4e3;font-weight:400;letter-spacing:0.4px;">Availability of Fanvil</div>
<div class="t w4" style="left:570px;top:1809.92px;font-size:28.5px;line-height:36px;color:#8db4e3;font-weight:400;letter-spacing:0.4px;">X303P Pl</div>
<div class="t w4" style="left:570px;top:1852.08px;font-size:24px;line-height:32px;color:#a1a1aa;font-weight:400;letter-spacing:0.84px;">Commercial</div>
<div class="r" style="left:987.5px;top:550.5px;width:467.5px;height:251.2px;background:#232326;border-radius:22px;box-shadow:0 0 3px rgba(0,0,0,.3);"></div>
<div class="r" style="left:1264.0px;top:585.2px;width:159px;height:40px;background:#232b26;border-radius:20px;"></div>
<div class="t" style="left:1264.0px;top:585.2px;width:159px;height:40px;line-height:40px;text-align:center;font-size:20px;font-weight:700;color:#2b7d3e;letter-spacing:0.2px">upd by agent</div>
<div class="t w4" style="left:1019.5px;top:584.32px;font-size:28.5px;line-height:36px;color:#8db4e3;font-weight:400;letter-spacing:0.4px;">Demande</div>
<div class="t w4" style="left:1019.5px;top:624.32px;font-size:28.5px;line-height:36px;color:#8db4e3;font-weight:400;letter-spacing:0.4px;">WhatsApp de</div>
<div class="t w4" style="left:1019.5px;top:664.32px;font-size:28.5px;line-height:36px;color:#8db4e3;font-weight:400;letter-spacing:0.4px;">+212668726359</div>
<div class="t w4" style="left:1019.5px;top:706.48px;font-size:24px;line-height:32px;color:#a1a1aa;font-weight:400;letter-spacing:0.84px;">+212668726359@whatsapp</div>
<div class="t w4" style="left:1019.5px;top:738.48px;font-size:24px;line-height:32px;color:#a1a1aa;font-weight:400;letter-spacing:0.84px;">Commercial</div>
<div class="r" style="left:987.5px;top:850px;width:467.5px;height:251.2px;background:#232326;border-radius:22px;box-shadow:0 0 3px rgba(0,0,0,.3);"></div>
<div class="r" style="left:1278.0px;top:884.7px;width:145px;height:40px;background:#3a3126;border-radius:20px;"></div>
<div class="t" style="left:1278.0px;top:884.7px;width:145px;height:40px;line-height:40px;text-align:center;font-size:20px;font-weight:700;color:#f5b731;letter-spacing:0.2px">upd by cust</div>
<div class="t w4" style="left:1019.5px;top:883.82px;font-size:28.5px;line-height:36px;color:#8db4e3;font-weight:400;letter-spacing:0.4px;">Demande</div>
<div class="t w4" style="left:1019.5px;top:923.82px;font-size:28.5px;line-height:36px;color:#8db4e3;font-weight:400;letter-spacing:0.4px;">WhatsApp de</div>
<div class="t w4" style="left:1019.5px;top:963.82px;font-size:28.5px;line-height:36px;color:#8db4e3;font-weight:400;letter-spacing:0.4px;">+212661821007</div>
<div class="t w4" style="left:1019.5px;top:1005.98px;font-size:24px;line-height:32px;color:#a1a1aa;font-weight:400;letter-spacing:0.84px;">+212661821007@whatsapp</div>
<div class="t w4" style="left:1019.5px;top:1037.98px;font-size:24px;line-height:32px;color:#a1a1aa;font-weight:400;letter-spacing:0.84px;">Commercial</div>
<div class="r" style="left:987.5px;top:1150px;width:467.5px;height:179.2px;background:#232326;border-radius:22px;box-shadow:0 0 3px rgba(0,0,0,.3);"></div>
<div class="r" style="left:1264.0px;top:1184.7px;width:159px;height:40px;background:#232b26;border-radius:20px;"></div>
<div class="t" style="left:1264.0px;top:1184.7px;width:159px;height:40px;line-height:40px;text-align:center;font-size:20px;font-weight:700;color:#2b7d3e;letter-spacing:0.2px">upd by agent</div>
<div class="t w4" style="left:1019.5px;top:1183.82px;font-size:28.5px;line-height:36px;color:#8db4e3;font-weight:400;letter-spacing:0.4px;">Config edge</div>
<div class="t w4" style="left:1019.5px;top:1223.82px;font-size:28.5px;line-height:36px;color:#8db4e3;font-weight:400;letter-spacing:0.4px;">router</div>
<div class="t w4" style="left:1019.5px;top:1265.98px;font-size:24px;line-height:32px;color:#a1a1aa;font-weight:400;letter-spacing:0.84px;">cn8ar@yahoo.fr Support</div>
<div class="r" style="left:987.5px;top:1378px;width:467.5px;height:331.2px;background:#232326;border-radius:22px;box-shadow:0 0 3px rgba(0,0,0,.3);"></div>
<div class="r" style="left:1264.0px;top:1412.7px;width:159px;height:40px;background:#232b26;border-radius:20px;"></div>
<div class="t" style="left:1264.0px;top:1412.7px;width:159px;height:40px;line-height:40px;text-align:center;font-size:20px;font-weight:700;color:#2b7d3e;letter-spacing:0.2px">upd by agent</div>
<div class="t w4" style="left:1019.5px;top:1411.82px;font-size:28.5px;line-height:36px;color:#8db4e3;font-weight:400;letter-spacing:0.4px;">Demande d&#x27;arrêt</div>
<div class="t w4" style="left:1019.5px;top:1451.82px;font-size:28.5px;line-height:36px;color:#8db4e3;font-weight:400;letter-spacing:0.4px;">d&#x27;huile pour</div>
<div class="t w4" style="left:1019.5px;top:1491.82px;font-size:28.5px;line-height:36px;color:#8db4e3;font-weight:400;letter-spacing:0.4px;">fourches Goldwing 1800</div>
<div class="t w4" style="left:1019.5px;top:1531.82px;font-size:28.5px;line-height:36px;color:#8db4e3;font-weight:400;letter-spacing:0.4px;">modèle 2015 - Assistance et</div>
<div class="t w4" style="left:1019.5px;top:1571.82px;font-size:28.5px;line-height:36px;color:#8db4e3;font-weight:400;letter-spacing:0.4px;">devis possible</div>
<div class="t w4" style="left:1019.5px;top:1613.98px;font-size:24px;line-height:32px;color:#a1a1aa;font-weight:400;letter-spacing:0.84px;">Kboukil@hotelsatlas.com</div>
<div class="t w4" style="left:1019.5px;top:1645.98px;font-size:24px;line-height:32px;color:#a1a1aa;font-weight:400;letter-spacing:0.84px;">Commercial</div>
<div class="r" style="left:987.5px;top:1758.5px;width:467.5px;height:179.2px;background:#232326;border-radius:22px;box-shadow:0 0 3px rgba(0,0,0,.3);"></div>
<div class="t w4" style="left:1019.5px;top:1792.32px;font-size:28.5px;line-height:36px;color:#8db4e3;font-weight:400;letter-spacing:0.4px;">TR: Enregistreurs</div>
<div class="t w4" style="left:1019.5px;top:1832.32px;font-size:28.5px;line-height:36px;color:#8db4e3;font-weight:400;letter-spacing:0.4px;">x</div>
<div class="t w4" style="left:1019.5px;top:1874.48px;font-size:24px;line-height:32px;color:#a1a1aa;font-weight:400;letter-spacing:0.84px;">x</div>
<div class="r" style="left:1521px;top:550px;width:383px;height:291.2px;background:#232326;border-radius:22px;box-shadow:0 0 3px rgba(0,0,0,.3);"></div>
<div class="r" style="left:1713px;top:584.7px;width:159px;height:40px;background:#232b26;border-radius:20px;"></div>
<div class="t" style="left:1713.0px;top:584.7px;width:159px;height:40px;line-height:40px;text-align:center;font-size:20px;font-weight:700;color:#2b7d3e;letter-spacing:0.2px">upd by agent</div>
<div class="t w4" style="left:1553px;top:583.82px;font-size:28.5px;line-height:36px;color:#8db4e3;font-weight:400;letter-spacing:0.4px;">Demande</div>
<div class="t w4" style="left:1553px;top:623.82px;font-size:28.5px;line-height:36px;color:#8db4e3;font-weight:400;letter-spacing:0.4px;">de devis :</div>
<div class="t w4" style="left:1553px;top:663.82px;font-size:28.5px;line-height:36px;color:#8db4e3;font-weight:400;letter-spacing:0.4px;">KONICA MINOLTA</div>
<div class="t w4" style="left:1553px;top:703.82px;font-size:28.5px;line-height:36px;color:#8db4e3;font-weight:400;letter-spacing:0.4px;">Bizhub C251i</div>
<div class="t w4" style="left:1553px;top:745.98px;font-size:24px;line-height:32px;color:#a1a1aa;font-weight:400;letter-spacing:0.84px;">rochdi.bo@gmail.com</div>
<div class="t w4" style="left:1553px;top:777.98px;font-size:24px;line-height:32px;color:#a1a1aa;font-weight:400;letter-spacing:0.84px;">Commercial</div>
<div class="r" style="left:1521px;top:889.7px;width:383px;height:371.2px;background:#232326;border-radius:22px;box-shadow:0 0 3px rgba(0,0,0,.3);"></div>
<div class="r" style="left:1713px;top:924.4px;width:159px;height:40px;background:#232b26;border-radius:20px;"></div>
<div class="t" style="left:1713.0px;top:924.4px;width:159px;height:40px;line-height:40px;text-align:center;font-size:20px;font-weight:700;color:#2b7d3e;letter-spacing:0.2px">upd by agent</div>
<div class="t w4" style="left:1553px;top:923.52px;font-size:28.5px;line-height:36px;color:#8db4e3;font-weight:400;letter-spacing:0.4px;">Demande</div>
<div class="t w4" style="left:1553px;top:963.52px;font-size:28.5px;line-height:36px;color:#8db4e3;font-weight:400;letter-spacing:0.4px;">de devis</div>
<div class="t w4" style="left:1553px;top:1003.52px;font-size:28.5px;line-height:36px;color:#8db4e3;font-weight:400;letter-spacing:0.4px;">pour photocopieuse</div>
<div class="t w4" style="left:1553px;top:1043.52px;font-size:28.5px;line-height:36px;color:#8db4e3;font-weight:400;letter-spacing:0.4px;">avec caractéristiques</div>
<div class="t w4" style="left:1553px;top:1083.52px;font-size:28.5px;line-height:36px;color:#8db4e3;font-weight:400;letter-spacing:0.4px;">techniques spécifiques</div>
<div class="t w4" style="left:1553px;top:1123.52px;font-size:28.5px;line-height:36px;color:#8db4e3;font-weight:400;letter-spacing:0.4px;">en gros (10 pièces)</div>
<div class="t w4" style="left:1553px;top:1165.68px;font-size:24px;line-height:32px;color:#a1a1aa;font-weight:400;letter-spacing:0.84px;">+212675828739@whatsapp</div>
<div class="t w4" style="left:1553px;top:1197.68px;font-size:24px;line-height:32px;color:#a1a1aa;font-weight:400;letter-spacing:0.84px;">Commercial</div>
<div class="r" style="left:1521px;top:1310px;width:383px;height:333.9px;background:#232326;border-radius:22px;box-shadow:0 0 3px rgba(0,0,0,.3);"></div>
<div class="r" style="left:1713px;top:1344.7px;width:159px;height:40px;background:#232b26;border-radius:20px;"></div>
<div class="t" style="left:1713.0px;top:1344.7px;width:159px;height:40px;line-height:40px;text-align:center;font-size:20px;font-weight:700;color:#2b7d3e;letter-spacing:0.2px">upd by agent</div>
<div class="t w4" style="left:1553px;top:1343.82px;font-size:28.5px;line-height:36px;color:#8db4e3;font-weight:400;letter-spacing:0.4px;">Demande</div>
<div class="t w4" style="left:1553px;top:1386.52px;font-size:28.5px;line-height:36px;color:#8db4e3;font-weight:400;letter-spacing:0.4px;">d&#x27;informations sur</div>
<div class="t w4" style="left:1553px;top:1426.52px;font-size:28.5px;line-height:36px;color:#8db4e3;font-weight:400;letter-spacing:0.4px;">l&#x27;imprimante Zebra</div>
<div class="t w4" style="left:1553px;top:1466.52px;font-size:28.5px;line-height:36px;color:#8db4e3;font-weight:400;letter-spacing:0.4px;">ZD421 via WhatsApp</div>
<div class="t w4" style="left:1553px;top:1506.52px;font-size:28.5px;line-height:36px;color:#8db4e3;font-weight:400;letter-spacing:0.4px;">+212661097707</div>
<div class="t w4" style="left:1553px;top:1548.68px;font-size:24px;line-height:32px;color:#a1a1aa;font-weight:400;letter-spacing:0.84px;">+212661097707@whatsapp</div>
<div class="t w4" style="left:1553px;top:1580.68px;font-size:24px;line-height:32px;color:#a1a1aa;font-weight:400;letter-spacing:0.84px;">Commercial</div>
<div class="r" style="left:1521px;top:1693px;width:383px;height:219.2px;background:#232326;border-radius:22px;box-shadow:0 0 3px rgba(0,0,0,.3);"></div>
<div class="r" style="left:1713px;top:1727.7px;width:159px;height:40px;background:#232b26;border-radius:20px;"></div>
<div class="t" style="left:1713.0px;top:1727.7px;width:159px;height:40px;line-height:40px;text-align:center;font-size:20px;font-weight:700;color:#2b7d3e;letter-spacing:0.2px">upd by agent</div>
<div class="t w4" style="left:1553px;top:1726.82px;font-size:28.5px;line-height:36px;color:#8db4e3;font-weight:400;letter-spacing:0.4px;">Demande</div>
<div class="t w4" style="left:1553px;top:1766.82px;font-size:28.5px;line-height:36px;color:#8db4e3;font-weight:400;letter-spacing:0.4px;">de devis :</div>
<div class="t w4" style="left:1553px;top:1806.82px;font-size:28.5px;line-height:36px;color:#8db4e3;font-weight:400;letter-spacing:0.4px;">WDLink WD8260</div>
<div class="t w4" style="left:1553px;top:1848.98px;font-size:24px;line-height:32px;color:#a1a1aa;font-weight:400;letter-spacing:0.84px;">Commercial</div>
<div class="r" style="left:1970px;top:550px;width:387px;height:251.2px;background:#232326;border-radius:22px;box-shadow:0 0 3px rgba(0,0,0,.3);"></div>
<div class="r" style="left:2166px;top:584.7px;width:159px;height:40px;background:#232b26;border-radius:20px;"></div>
<div class="t" style="left:2166.0px;top:584.7px;width:159px;height:40px;line-height:40px;text-align:center;font-size:20px;font-weight:700;color:#2b7d3e;letter-spacing:0.2px">upd by agent</div>
<div class="t w4" style="left:2002px;top:583.82px;font-size:28.5px;line-height:36px;color:#8db4e3;font-weight:400;letter-spacing:0.4px;">Demande</div>
<div class="t w4" style="left:2002px;top:623.82px;font-size:28.5px;line-height:36px;color:#8db4e3;font-weight:400;letter-spacing:0.4px;">de devis :</div>
<div class="t w4" style="left:2002px;top:663.82px;font-size:28.5px;line-height:36px;color:#8db4e3;font-weight:400;letter-spacing:0.4px;">WDLink WD0408</div>
<div class="t w4" style="left:2002px;top:705.98px;font-size:24px;line-height:32px;color:#a1a1aa;font-weight:400;letter-spacing:0.84px;">begttd34@gmail.com</div>
<div class="t w4" style="left:2002px;top:737.98px;font-size:24px;line-height:32px;color:#a1a1aa;font-weight:400;letter-spacing:0.84px;">Commercial</div>
<div class="r" style="left:1970px;top:850.2px;width:387px;height:331.2px;background:#232326;border-radius:22px;box-shadow:0 0 3px rgba(0,0,0,.3);"></div>
<div class="r" style="left:2166px;top:884.9px;width:159px;height:40px;background:#232b26;border-radius:20px;"></div>
<div class="t" style="left:2166.0px;top:884.9px;width:159px;height:40px;line-height:40px;text-align:center;font-size:20px;font-weight:700;color:#2b7d3e;letter-spacing:0.2px">upd by agent</div>
<div class="t w4" style="left:2002px;top:884.02px;font-size:28.5px;line-height:36px;color:#8db4e3;font-weight:400;letter-spacing:0.4px;">Demande</div>
<div class="t w4" style="left:2002px;top:924.02px;font-size:28.5px;line-height:36px;color:#8db4e3;font-weight:400;letter-spacing:0.4px;">de devis et</div>
<div class="t w4" style="left:2002px;top:964.02px;font-size:28.5px;line-height:36px;color:#8db4e3;font-weight:400;letter-spacing:0.4px;">facturation pour Avaya</div>
<div class="t w4" style="left:2002px;top:1004.02px;font-size:28.5px;line-height:36px;color:#8db4e3;font-weight:400;letter-spacing:0.4px;">J179 - Client existant</div>
<div class="t w4" style="left:2002px;top:1044.02px;font-size:28.5px;line-height:36px;color:#8db4e3;font-weight:400;letter-spacing:0.4px;">MICROLAZER</div>
<div class="t w4" style="left:2002px;top:1086.18px;font-size:24px;line-height:32px;color:#a1a1aa;font-weight:400;letter-spacing:0.84px;">yassine.yakine@kapset.com</div>
<div class="t w4" style="left:2002px;top:1118.18px;font-size:24px;line-height:32px;color:#a1a1aa;font-weight:400;letter-spacing:0.84px;">Commercial</div>
<div class="r" style="left:1970px;top:1230px;width:387px;height:291.2px;background:#232326;border-radius:22px;box-shadow:0 0 3px rgba(0,0,0,.3);"></div>
<div class="r" style="left:2180px;top:1264.7px;width:145px;height:40px;background:#3a3126;border-radius:20px;"></div>
<div class="t" style="left:2180.0px;top:1264.7px;width:145px;height:40px;line-height:40px;text-align:center;font-size:20px;font-weight:700;color:#f5b731;letter-spacing:0.2px">upd by cust</div>
<div class="t w4" style="left:2002px;top:1263.82px;font-size:28.5px;line-height:36px;color:#8db4e3;font-weight:400;letter-spacing:0.4px;">Demande de</div>
<div class="t w4" style="left:2002px;top:1303.82px;font-size:28.5px;line-height:36px;color:#8db4e3;font-weight:400;letter-spacing:0.4px;">devis pour 18</div>
<div class="t w4" style="left:2002px;top:1343.82px;font-size:28.5px;line-height:36px;color:#8db4e3;font-weight:400;letter-spacing:0.4px;">Disques Durs SSD</div>
<div class="t w4" style="left:2002px;top:1383.82px;font-size:28.5px;line-height:36px;color:#8db4e3;font-weight:400;letter-spacing:0.4px;">Netac SA500 512Go 2.5</div>
<div class="t w4" style="left:2002px;top:1425.98px;font-size:24px;line-height:32px;color:#a1a1aa;font-weight:400;letter-spacing:0.84px;">ayoublahmini99@gmail.com</div>
<div class="t w4" style="left:2002px;top:1457.98px;font-size:24px;line-height:32px;color:#a1a1aa;font-weight:400;letter-spacing:0.84px;">Commercial</div>
<div class="r" style="left:1970px;top:1569.7px;width:387px;height:331.2px;background:#232326;border-radius:22px;box-shadow:0 0 3px rgba(0,0,0,.3);"></div>
<div class="r" style="left:2166px;top:1604.4px;width:159px;height:40px;background:#232b26;border-radius:20px;"></div>
<div class="t" style="left:2166.0px;top:1604.4px;width:159px;height:40px;line-height:40px;text-align:center;font-size:20px;font-weight:700;color:#2b7d3e;letter-spacing:0.2px">upd by agent</div>
<div class="t w4" style="left:2002px;top:1603.52px;font-size:28.5px;line-height:36px;color:#8db4e3;font-weight:400;letter-spacing:0.4px;">Demande</div>
<div class="t w4" style="left:2002px;top:1643.52px;font-size:28.5px;line-height:36px;color:#8db4e3;font-weight:400;letter-spacing:0.4px;">de devis</div>
<div class="t w4" style="left:2002px;top:1683.52px;font-size:28.5px;line-height:36px;color:#8db4e3;font-weight:400;letter-spacing:0.4px;">personnalisé pour</div>
<div class="t w4" style="left:2002px;top:1723.52px;font-size:28.5px;line-height:36px;color:#8db4e3;font-weight:400;letter-spacing:0.4px;">tourniquet double non</div>
<div class="t w4" style="left:2002px;top:1763.52px;font-size:28.5px;line-height:36px;color:#8db4e3;font-weight:400;letter-spacing:0.4px;">disponible en catalogue</div>
<div class="t w4" style="left:2002px;top:1805.68px;font-size:24px;line-height:32px;color:#a1a1aa;font-weight:400;letter-spacing:0.84px;">Info@compresseur.ma</div>
<div class="t w4" style="left:2002px;top:1837.68px;font-size:24px;line-height:32px;color:#a1a1aa;font-weight:400;letter-spacing:0.84px;">Commercial</div>
<div class="r" style="left:2423px;top:550.5px;width:443px;height:251.2px;background:#232326;border-radius:22px;box-shadow:0 0 3px rgba(0,0,0,.3);"></div>
<div class="r" style="left:2675px;top:585.2px;width:159px;height:40px;background:#232b26;border-radius:20px;"></div>
<div class="t" style="left:2675.0px;top:585.2px;width:159px;height:40px;line-height:40px;text-align:center;font-size:20px;font-weight:700;color:#2b7d3e;letter-spacing:0.2px">upd by agent</div>
<div class="t w4" style="left:2455px;top:584.32px;font-size:28.5px;line-height:36px;color:#8db4e3;font-weight:400;letter-spacing:0.4px;">Demande</div>
<div class="t w4" style="left:2455px;top:624.32px;font-size:28.5px;line-height:36px;color:#8db4e3;font-weight:400;letter-spacing:0.4px;">Yeastar</div>
<div class="t w4" style="left:2455px;top:664.32px;font-size:28.5px;line-height:36px;color:#8db4e3;font-weight:400;letter-spacing:0.4px;">TG800G</div>
<div class="t w4" style="left:2455px;top:706.48px;font-size:24px;line-height:32px;color:#a1a1aa;font-weight:400;letter-spacing:0.84px;">+212708235357@whatsapp</div>
<div class="t w4" style="left:2455px;top:738.48px;font-size:24px;line-height:32px;color:#a1a1aa;font-weight:400;letter-spacing:0.84px;">Commercial</div>
<div class="r" style="left:2423px;top:850.6px;width:443px;height:251.2px;background:#232326;border-radius:22px;box-shadow:0 0 3px rgba(0,0,0,.3);"></div>
<div class="r" style="left:2675px;top:885.3px;width:159px;height:40px;background:#232b26;border-radius:20px;"></div>
<div class="t" style="left:2675.0px;top:885.3px;width:159px;height:40px;line-height:40px;text-align:center;font-size:20px;font-weight:700;color:#2b7d3e;letter-spacing:0.2px">upd by agent</div>
<div class="t w4" style="left:2455px;top:884.42px;font-size:28.5px;line-height:36px;color:#8db4e3;font-weight:400;letter-spacing:0.4px;">Demande</div>
<div class="t w4" style="left:2455px;top:924.42px;font-size:28.5px;line-height:36px;color:#8db4e3;font-weight:400;letter-spacing:0.4px;">Seagate</div>
<div class="t w4" style="left:2455px;top:964.42px;font-size:28.5px;line-height:36px;color:#8db4e3;font-weight:400;letter-spacing:0.4px;">ST6000VX009</div>
<div class="t w4" style="left:2455px;top:1006.58px;font-size:24px;line-height:32px;color:#a1a1aa;font-weight:400;letter-spacing:0.84px;">+212610215076@whatsapp</div>
<div class="t w4" style="left:2455px;top:1038.58px;font-size:24px;line-height:32px;color:#a1a1aa;font-weight:400;letter-spacing:0.84px;">Commercial</div>
<div class="r" style="left:2423px;top:1150.6px;width:443px;height:331.2px;background:#232326;border-radius:22px;box-shadow:0 0 3px rgba(0,0,0,.3);"></div>
<div class="r" style="left:2675px;top:1185.3px;width:159px;height:40px;background:#232b26;border-radius:20px;"></div>
<div class="t" style="left:2675.0px;top:1185.3px;width:159px;height:40px;line-height:40px;text-align:center;font-size:20px;font-weight:700;color:#2b7d3e;letter-spacing:0.2px">upd by agent</div>
<div class="t w4" style="left:2455px;top:1184.42px;font-size:28.5px;line-height:36px;color:#8db4e3;font-weight:400;letter-spacing:0.4px;">Demande de</div>
<div class="t w4" style="left:2455px;top:1224.42px;font-size:28.5px;line-height:36px;color:#8db4e3;font-weight:400;letter-spacing:0.4px;">devis pour 10</div>
<div class="t w4" style="left:2455px;top:1264.42px;font-size:28.5px;line-height:36px;color:#8db4e3;font-weight:400;letter-spacing:0.4px;">disques SSD Samsung 870</div>
<div class="t w4" style="left:2455px;top:1304.42px;font-size:28.5px;line-height:36px;color:#8db4e3;font-weight:400;letter-spacing:0.4px;">EVO 500GB MZ-</div>
<div class="t w4" style="left:2455px;top:1344.42px;font-size:28.5px;line-height:36px;color:#8db4e3;font-weight:400;letter-spacing:0.4px;">77E500B/EU</div>
<div class="t w4" style="left:2455px;top:1386.58px;font-size:24px;line-height:32px;color:#a1a1aa;font-weight:400;letter-spacing:0.84px;">+212645290675@whatsapp</div>
<div class="t w4" style="left:2455px;top:1418.58px;font-size:24px;line-height:32px;color:#a1a1aa;font-weight:400;letter-spacing:0.84px;">Commercial</div>
<div class="r" style="left:2423px;top:1530.5px;width:443px;height:371.2px;background:#232326;border-radius:22px;box-shadow:0 0 3px rgba(0,0,0,.3);"></div>
<div class="r" style="left:2675px;top:1565.2px;width:159px;height:40px;background:#232b26;border-radius:20px;"></div>
<div class="t" style="left:2675.0px;top:1565.2px;width:159px;height:40px;line-height:40px;text-align:center;font-size:20px;font-weight:700;color:#2b7d3e;letter-spacing:0.2px">upd by agent</div>
<div class="t w4" style="left:2455px;top:1564.32px;font-size:28.5px;line-height:36px;color:#8db4e3;font-weight:400;letter-spacing:0.4px;">Demande de</div>
<div class="t w4" style="left:2455px;top:1604.32px;font-size:28.5px;line-height:36px;color:#8db4e3;font-weight:400;letter-spacing:0.4px;">devis : OpenVox</div>
<div class="t w4" style="left:2455px;top:1644.32px;font-size:28.5px;line-height:36px;color:#8db4e3;font-weight:400;letter-spacing:0.4px;">SWG-3008G ; Merci de bien</div>
<div class="t w4" style="left:2455px;top:1684.32px;font-size:28.5px;line-height:36px;color:#8db4e3;font-weight:400;letter-spacing:0.4px;">vouloir m&#x27;envoyer un devis</div>
<div class="t w4" style="left:2455px;top:1724.32px;font-size:28.5px;line-height:36px;color:#8db4e3;font-weight:400;letter-spacing:0.4px;">avec main d&#x27;oeuvre pour les</div>
<div class="t w4" style="left:2455px;top:1764.32px;font-size:28.5px;line-height:36px;color:#8db4e3;font-weight:400;letter-spacing:0.4px;">produits suivants :</div>
<div class="t w4" style="left:2455px;top:1806.48px;font-size:24px;line-height:32px;color:#a1a1aa;font-weight:400;letter-spacing:0.84px;">sami.z.cpr@gmail.com</div>
<div class="t w4" style="left:2455px;top:1838.48px;font-size:24px;line-height:32px;color:#a1a1aa;font-weight:400;letter-spacing:0.84px;">Commercial</div>
<div class="r" style="left:2932px;top:550px;width:343px;height:294.8px;background:#232326;border-radius:22px;box-shadow:0 0 3px rgba(0,0,0,.3);"></div>
<div class="r" style="left:3084px;top:584.7px;width:159px;height:40px;background:#232b26;border-radius:20px;"></div>
<div class="t" style="left:3084.0px;top:584.7px;width:159px;height:40px;line-height:40px;text-align:center;font-size:20px;font-weight:700;color:#2b7d3e;letter-spacing:0.2px">upd by agent</div>
<div class="t w4" style="left:2964px;top:627.42px;font-size:28.5px;line-height:36px;color:#8db4e3;font-weight:400;letter-spacing:0.4px;">Demande de devis :</div>
<div class="t w4" style="left:2964px;top:667.42px;font-size:28.5px;line-height:36px;color:#8db4e3;font-weight:400;letter-spacing:0.4px;">Smart Technologies</div>
<div class="t w4" style="left:2964px;top:707.42px;font-size:28.5px;line-height:36px;color:#8db4e3;font-weight:400;letter-spacing:0.4px;">GX086</div>
<div class="t w4" style="left:2964px;top:749.58px;font-size:24px;line-height:32px;color:#a1a1aa;font-weight:400;letter-spacing:0.84px;">saharacups@gmail.com</div>
<div class="t w4" style="left:2964px;top:781.58px;font-size:24px;line-height:32px;color:#a1a1aa;font-weight:400;letter-spacing:0.84px;">Commercial</div>
<div class="r" style="left:2932px;top:892.5px;width:343px;height:254.8px;background:#232326;border-radius:22px;box-shadow:0 0 3px rgba(0,0,0,.3);"></div>
<div class="r" style="left:3084px;top:927.2px;width:159px;height:40px;background:#232b26;border-radius:20px;"></div>
<div class="t" style="left:3084.0px;top:927.2px;width:159px;height:40px;line-height:40px;text-align:center;font-size:20px;font-weight:700;color:#2b7d3e;letter-spacing:0.2px">upd by agent</div>
<div class="t w4" style="left:2964px;top:969.92px;font-size:28.5px;line-height:36px;color:#8db4e3;font-weight:400;letter-spacing:0.4px;">Demande de devis :</div>
<div class="t w4" style="left:2964px;top:1009.92px;font-size:28.5px;line-height:36px;color:#8db4e3;font-weight:400;letter-spacing:0.4px;">MarocVentes APP M</div>
<div class="t w4" style="left:2964px;top:1052.08px;font-size:24px;line-height:32px;color:#a1a1aa;font-weight:400;letter-spacing:0.84px;">jackmastour@gmail.com</div>
<div class="t w4" style="left:2964px;top:1084.08px;font-size:24px;line-height:32px;color:#a1a1aa;font-weight:400;letter-spacing:0.84px;">Commercial</div>
<div class="r" style="left:2932px;top:1195.7px;width:343px;height:414.8px;background:#232326;border-radius:22px;box-shadow:0 0 3px rgba(0,0,0,.3);"></div>
<div class="r" style="left:3084px;top:1230.4px;width:159px;height:40px;background:#232b26;border-radius:20px;"></div>
<div class="t" style="left:3084.0px;top:1230.4px;width:159px;height:40px;line-height:40px;text-align:center;font-size:20px;font-weight:700;color:#2b7d3e;letter-spacing:0.2px">upd by agent</div>
<div class="t w4" style="left:2964px;top:1273.12px;font-size:28.5px;line-height:36px;color:#8db4e3;font-weight:400;letter-spacing:0.4px;">Demande de devis</div>
<div class="t w4" style="left:2964px;top:1313.12px;font-size:28.5px;line-height:36px;color:#8db4e3;font-weight:400;letter-spacing:0.4px;">pour 12 panneaux de</div>
<div class="t w4" style="left:2964px;top:1353.12px;font-size:28.5px;line-height:36px;color:#8db4e3;font-weight:400;letter-spacing:0.4px;">brassage 19&quot; 24</div>
<div class="t w4" style="left:2964px;top:1393.12px;font-size:28.5px;line-height:36px;color:#8db4e3;font-weight:400;letter-spacing:0.4px;">ports CAT6 et 20m</div>
<div class="t w4" style="left:2964px;top:1433.12px;font-size:28.5px;line-height:36px;color:#8db4e3;font-weight:400;letter-spacing:0.4px;">de chemin de câble</div>
<div class="t w4" style="left:2964px;top:1473.12px;font-size:28.5px;line-height:36px;color:#8db4e3;font-weight:400;letter-spacing:0.4px;">96</div>
<div class="t w4" style="left:2964px;top:1515.28px;font-size:24px;line-height:32px;color:#a1a1aa;font-weight:400;letter-spacing:0.84px;">mkadiri@inapeq.ma</div>
<div class="t w4" style="left:2964px;top:1547.28px;font-size:24px;line-height:32px;color:#a1a1aa;font-weight:400;letter-spacing:0.84px;">Commercial</div>
<div class="r" style="left:2932px;top:1658.8px;width:343px;height:262.8px;background:#232326;border-radius:22px;box-shadow:0 0 3px rgba(0,0,0,.3);"></div>
<div class="r" style="left:3084px;top:1693.5px;width:159px;height:40px;background:#232b26;border-radius:20px;"></div>
<div class="t" style="left:3084.0px;top:1693.5px;width:159px;height:40px;line-height:40px;text-align:center;font-size:20px;font-weight:700;color:#2b7d3e;letter-spacing:0.2px">upd by agent</div>
<div class="t w4" style="left:2964px;top:1736.22px;font-size:28.5px;line-height:36px;color:#8db4e3;font-weight:400;letter-spacing:0.4px;">Demande de devis :</div>
<div class="t w4" style="left:2964px;top:1776.22px;font-size:28.5px;line-height:36px;color:#8db4e3;font-weight:400;letter-spacing:0.4px;">Fanvil V62 Pro</div>
<div class="t w4" style="left:2964px;top:1816.22px;font-size:28.5px;line-height:36px;color:#8db4e3;font-weight:400;letter-spacing:0.4px;">x</div>
<div class="t w4" style="left:2964px;top:1858.38px;font-size:24px;line-height:32px;color:#a1a1aa;font-weight:400;letter-spacing:0.84px;">x</div>
<div class="r" style="left:3341px;top:550px;width:297px;height:334.8px;background:#232326;border-radius:22px;box-shadow:0 0 3px rgba(0,0,0,.3);"></div>
<div class="r" style="left:3447px;top:584.7px;width:159px;height:40px;background:#232b26;border-radius:20px;"></div>
<div class="t" style="left:3447.0px;top:584.7px;width:159px;height:40px;line-height:40px;text-align:center;font-size:20px;font-weight:700;color:#2b7d3e;letter-spacing:0.2px">upd by agent</div>
<div class="t w4" style="left:3373px;top:627.42px;font-size:28.5px;line-height:36px;color:#8db4e3;font-weight:400;letter-spacing:0.4px;">Nouvelle Licence</div>
<div class="t w4" style="left:3373px;top:667.42px;font-size:28.5px;line-height:36px;color:#8db4e3;font-weight:400;letter-spacing:0.4px;">Adobe Creative</div>
<div class="t w4" style="left:3373px;top:707.42px;font-size:28.5px;line-height:36px;color:#8db4e3;font-weight:400;letter-spacing:0.4px;">Abonnement de 1</div>
<div class="t w4" style="left:3373px;top:747.42px;font-size:28.5px;line-height:36px;color:#8db4e3;font-weight:400;letter-spacing:0.4px;">AN</div>
<div class="t w4" style="left:3373px;top:789.58px;font-size:24px;line-height:32px;color:#a1a1aa;font-weight:400;letter-spacing:0.84px;">tarik@directprint.ma</div>
<div class="t w4" style="left:3373px;top:821.58px;font-size:24px;line-height:32px;color:#a1a1aa;font-weight:400;letter-spacing:0.84px;">Commercial</div>
<div class="r" style="left:3341px;top:932.7px;width:297px;height:253.9px;background:#232326;border-radius:22px;box-shadow:0 0 3px rgba(0,0,0,.3);"></div>
<div class="r" style="left:3447px;top:967.4px;width:159px;height:40px;background:#232b26;border-radius:20px;"></div>
<div class="t" style="left:3447.0px;top:967.4px;width:159px;height:40px;line-height:40px;text-align:center;font-size:20px;font-weight:700;color:#2b7d3e;letter-spacing:0.2px">upd by agent</div>
<div class="t w4" style="left:3373px;top:966.52px;font-size:28.5px;line-height:36px;color:#8db4e3;font-weight:400;letter-spacing:0.4px;">Potail</div>
<div class="t w4" style="left:3373px;top:1009.22px;font-size:28.5px;line-height:36px;color:#8db4e3;font-weight:400;letter-spacing:0.4px;">Client MCC</div>
<div class="t w4" style="left:3373px;top:1049.22px;font-size:28.5px;line-height:36px;color:#8db4e3;font-weight:400;letter-spacing:0.4px;">Maroc</div>
<div class="t w4" style="left:3373px;top:1091.38px;font-size:24px;line-height:32px;color:#a1a1aa;font-weight:400;letter-spacing:0.84px;">mcc@mccmaroc.ma</div>
<div class="t w4" style="left:3373px;top:1123.38px;font-size:24px;line-height:32px;color:#a1a1aa;font-weight:400;letter-spacing:0.84px;">Commercial</div>
<div class="r" style="left:3704px;top:550.5px;width:400px;height:371.2px;background:#232326;border-radius:22px;box-shadow:0 0 3px rgba(0,0,0,.3);"></div>
<div class="t w4" style="left:3736px;top:584.32px;font-size:28.5px;line-height:36px;color:#8db4e3;font-weight:400;letter-spacing:0.4px;">Demande de</div>
<div class="t w4" style="left:3736px;top:624.32px;font-size:28.5px;line-height:36px;color:#8db4e3;font-weight:400;letter-spacing:0.4px;">statut et</div>
<div class="t w4" style="left:3736px;top:664.32px;font-size:28.5px;line-height:36px;color:#8db4e3;font-weight:400;letter-spacing:0.4px;">mode de</div>
<div class="t w4" style="left:3736px;top:704.32px;font-size:28.5px;line-height:36px;color:#8db4e3;font-weight:400;letter-spacing:0.4px;">la commande</div>
<div class="t w4" style="left:3736px;top:744.32px;font-size:28.5px;line-height:36px;color:#8db4e3;font-weight:400;letter-spacing:0.4px;">du 29 janvier</div>
<div class="t w4" style="left:3736px;top:784.32px;font-size:28.5px;line-height:36px;color:#8db4e3;font-weight:400;letter-spacing:0.4px;">MarocVentes</div>
<div class="t w4" style="left:3736px;top:826.48px;font-size:24px;line-height:32px;color:#a1a1aa;font-weight:400;letter-spacing:0.84px;">atlantis.co@gmail.com</div>
<div class="t w4" style="left:3736px;top:858.48px;font-size:24px;line-height:32px;color:#a1a1aa;font-weight:400;letter-spacing:0.84px;">Commercial</div>
<div class="r" style="left:3704px;top:970px;width:400px;height:331.2px;background:#232326;border-radius:22px;box-shadow:0 0 3px rgba(0,0,0,.3);"></div>
<div class="t w4" style="left:3736px;top:1003.82px;font-size:28.5px;line-height:36px;color:#8db4e3;font-weight:400;letter-spacing:0.4px;">Demande</div>
<div class="t w4" style="left:3736px;top:1043.82px;font-size:28.5px;line-height:36px;color:#8db4e3;font-weight:400;letter-spacing:0.4px;">un écran</div>
<div class="t w4" style="left:3736px;top:1083.82px;font-size:28.5px;line-height:36px;color:#8db4e3;font-weight:400;letter-spacing:0.4px;">UltraSharp</div>
<div class="t w4" style="left:3736px;top:1123.82px;font-size:28.5px;line-height:36px;color:#8db4e3;font-weight:400;letter-spacing:0.4px;">avec accessoires</div>
<div class="t w4" style="left:3736px;top:1163.82px;font-size:28.5px;line-height:36px;color:#8db4e3;font-weight:400;letter-spacing:0.4px;">livraison</div>
<div class="t w4" style="left:3736px;top:1205.98px;font-size:24px;line-height:32px;color:#a1a1aa;font-weight:400;letter-spacing:0.84px;">+212610888888@whatsapp</div>
<div class="t w4" style="left:3736px;top:1237.98px;font-size:24px;line-height:32px;color:#a1a1aa;font-weight:400;letter-spacing:0.84px;">Commercial</div>
<svg class="ic" style="left:0;top:1782px;width:40px;height:40px" viewBox="0 0 40 40"><path d="M0 21 Q9 35 26 40 L0 40Z" fill="#161616"/><path d="M0 21 Q9 35 26 40" fill="none" stroke="#b9b9b9" stroke-width="2"/></svg>
<svg class="ic" style="left:3794px;top:1782px;width:40px;height:40px" viewBox="0 0 40 40"><path d="M40 8 Q36 32 14 40 L40 40Z" fill="#161616"/><path d="M40 8 Q36 32 14 40" fill="none" stroke="#9a9a9a" stroke-width="2"/></svg>
</body></html>
